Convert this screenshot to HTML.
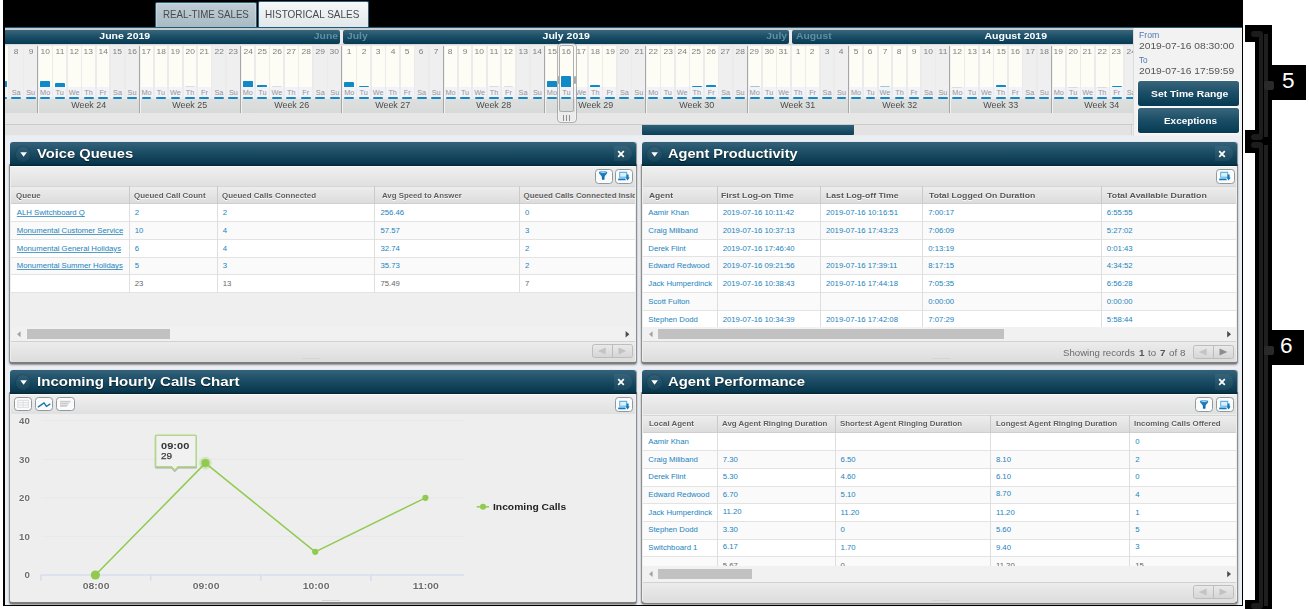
<!DOCTYPE html>
<html><head><meta charset="utf-8"><title>Dashboard</title>
<style>
html,body{margin:0;padding:0;background:#fff}
body{width:1309px;height:609px;position:relative;overflow:hidden;font-family:"Liberation Sans",sans-serif}
.a{position:absolute}
.t{position:absolute;white-space:pre;display:block}
.btn{box-sizing:border-box;border:1.7px solid #8f9a9e;border-radius:3.5px;background:#fbfbfb}
</style></head><body>
<div class="a" style="left:3px;top:0;width:1240px;height:606px;background:#000"></div>
<div class="a" style="left:5px;top:27px;width:1237px;height:578px;background:#ebeff3"></div>
<div class="a" style="left:155.30px;top:2.30px;width:100.20px;height:25.20px;background:linear-gradient(#bfcdd5,#a7bac4);border:1px solid #2f6077;border-bottom:none;border-radius:2px 2px 0 0;box-shadow:inset 0 0 0 1px rgba(255,255,255,.25)"></div>
<div class="a" style="left:258.00px;top:1.30px;width:109.30px;height:27.50px;background:linear-gradient(#f6f8f9,#dfe5e9);border:1px solid #2f6077;border-bottom:none;border-radius:2px 2px 0 0"></div>
<span class="t" style="left:162.60px;transform-origin:0 0;top:9.33px;font-size:10.6px;line-height:10.6px;color:#4a4a4a;transform:scaleX(0.9171);">REAL-TIME SALES</span>
<span class="t" style="left:265.20px;transform-origin:0 0;top:8.83px;font-size:10.6px;line-height:10.6px;color:#4a4a4a;transform:scaleX(0.9426);">HISTORICAL SALES</span>
<div class="a" style="left:5px;top:27px;width:1127.5px;height:109px;overflow:hidden;background:#ebebeb">
<div class="a" style="left:0.00px;top:0.00px;width:1128.00px;height:1.20px;background:#1f5a72"></div>
<div class="a" style="left:0.00px;top:1.20px;width:1128.00px;height:1.80px;background:#c3cdd2"></div>
<div class="a" style="left:-25.00px;top:3.00px;width:360.18px;height:13.60px;background:linear-gradient(#3a667c,#1c5068 45%,#063a52);border-radius:0 2px 2px 0"></div>
<div class="a" style="left:338.38px;top:3.00px;width:445.88px;height:13.60px;background:linear-gradient(#3a667c,#1c5068 45%,#063a52);border-radius:2px"></div>
<div class="a" style="left:787.46px;top:3.00px;width:400.00px;height:13.60px;background:linear-gradient(#3a667c,#1c5068 45%,#063a52);border-radius:2px 0 0 2px"></div>
<div class="a" style="left:0.00px;top:16.60px;width:1128.00px;height:1.90px;background:#d9d9d9"></div>
<div class="a" style="left:0.00px;top:72.40px;width:1128.00px;height:13.20px;background:linear-gradient(#dedfdf,#d8d9d9)"></div>
<div class="a" style="left:-9.74px;top:18.50px;width:12.88px;height:41.70px;background:#fdfdf6"></div>
<div class="a" style="left:-9.74px;top:60.20px;width:12.88px;height:9.70px;background:#f2f2f9"></div>
<div class="a" style="left:-8.24px;top:70.10px;width:9.88px;height:2.20px;background:#1488c4;border-radius:1px"></div>
<div class="a" style="left:-8.24px;top:54.00px;width:9.88px;height:6.00px;background:#0f8ac6;border-radius:1px 1px 0 0"></div>
<div class="a" style="left:4.74px;top:18.50px;width:12.88px;height:41.70px;background:#efefef"></div>
<div class="a" style="left:4.74px;top:60.20px;width:12.88px;height:9.70px;background:#efeff3"></div>
<div class="a" style="left:6.24px;top:70.10px;width:9.88px;height:2.20px;background:#1488c4;border-radius:1px"></div>
<div class="a" style="left:19.22px;top:18.50px;width:12.88px;height:41.70px;background:#efefef"></div>
<div class="a" style="left:19.22px;top:60.20px;width:12.88px;height:9.70px;background:#efeff3"></div>
<div class="a" style="left:20.72px;top:70.10px;width:9.88px;height:2.20px;background:#1488c4;border-radius:1px"></div>
<div class="a" style="left:33.70px;top:18.50px;width:12.88px;height:41.70px;background:#fdfdf6"></div>
<div class="a" style="left:33.70px;top:60.20px;width:12.88px;height:9.70px;background:#f2f2f9"></div>
<div class="a" style="left:35.20px;top:70.10px;width:9.88px;height:2.20px;background:#1488c4;border-radius:1px"></div>
<div class="a" style="left:35.20px;top:54.00px;width:9.88px;height:6.00px;background:#0f8ac6;border-radius:1px 1px 0 0"></div>
<div class="a" style="left:32.00px;top:18.50px;width:1.00px;height:67.00px;background:#a6a6a6"></div>
<div class="a" style="left:33.00px;top:18.50px;width:0.80px;height:67.00px;background:#f2f2f2"></div>
<div class="a" style="left:48.18px;top:18.50px;width:12.88px;height:41.70px;background:#fdfdf6"></div>
<div class="a" style="left:48.18px;top:60.20px;width:12.88px;height:9.70px;background:#f2f2f9"></div>
<div class="a" style="left:49.68px;top:70.10px;width:9.88px;height:2.20px;background:#1488c4;border-radius:1px"></div>
<div class="a" style="left:49.68px;top:56.40px;width:9.88px;height:3.60px;background:#0f8ac6;border-radius:1px 1px 0 0"></div>
<div class="a" style="left:62.66px;top:18.50px;width:12.88px;height:41.70px;background:#fdfdf6"></div>
<div class="a" style="left:62.66px;top:60.20px;width:12.88px;height:9.70px;background:#f2f2f9"></div>
<div class="a" style="left:64.16px;top:70.10px;width:9.88px;height:2.20px;background:#1488c4;border-radius:1px"></div>
<div class="a" style="left:77.14px;top:18.50px;width:12.88px;height:41.70px;background:#fdfdf6"></div>
<div class="a" style="left:77.14px;top:60.20px;width:12.88px;height:9.70px;background:#f2f2f9"></div>
<div class="a" style="left:78.64px;top:70.10px;width:9.88px;height:2.20px;background:#1488c4;border-radius:1px"></div>
<div class="a" style="left:91.62px;top:18.50px;width:12.88px;height:41.70px;background:#fdfdf6"></div>
<div class="a" style="left:91.62px;top:60.20px;width:12.88px;height:9.70px;background:#f2f2f9"></div>
<div class="a" style="left:93.12px;top:70.10px;width:9.88px;height:2.20px;background:#1488c4;border-radius:1px"></div>
<div class="a" style="left:106.10px;top:18.50px;width:12.88px;height:41.70px;background:#efefef"></div>
<div class="a" style="left:106.10px;top:60.20px;width:12.88px;height:9.70px;background:#efeff3"></div>
<div class="a" style="left:107.60px;top:70.10px;width:9.88px;height:2.20px;background:#1488c4;border-radius:1px"></div>
<div class="a" style="left:120.58px;top:18.50px;width:12.88px;height:41.70px;background:#efefef"></div>
<div class="a" style="left:120.58px;top:60.20px;width:12.88px;height:9.70px;background:#efeff3"></div>
<div class="a" style="left:122.08px;top:70.10px;width:9.88px;height:2.20px;background:#1488c4;border-radius:1px"></div>
<div class="a" style="left:135.06px;top:18.50px;width:12.88px;height:41.70px;background:#fdfdf6"></div>
<div class="a" style="left:135.06px;top:60.20px;width:12.88px;height:9.70px;background:#f2f2f9"></div>
<div class="a" style="left:136.56px;top:70.10px;width:9.88px;height:2.20px;background:#1488c4;border-radius:1px"></div>
<div class="a" style="left:134.00px;top:18.50px;width:1.00px;height:67.00px;background:#a6a6a6"></div>
<div class="a" style="left:135.00px;top:18.50px;width:0.80px;height:67.00px;background:#f2f2f2"></div>
<div class="a" style="left:149.54px;top:18.50px;width:12.88px;height:41.70px;background:#fdfdf6"></div>
<div class="a" style="left:149.54px;top:60.20px;width:12.88px;height:9.70px;background:#f2f2f9"></div>
<div class="a" style="left:151.04px;top:70.10px;width:9.88px;height:2.20px;background:#1488c4;border-radius:1px"></div>
<div class="a" style="left:164.02px;top:18.50px;width:12.88px;height:41.70px;background:#fdfdf6"></div>
<div class="a" style="left:164.02px;top:60.20px;width:12.88px;height:9.70px;background:#f2f2f9"></div>
<div class="a" style="left:165.52px;top:70.10px;width:9.88px;height:2.20px;background:#1488c4;border-radius:1px"></div>
<div class="a" style="left:178.50px;top:18.50px;width:12.88px;height:41.70px;background:#fdfdf6"></div>
<div class="a" style="left:178.50px;top:60.20px;width:12.88px;height:9.70px;background:#f2f2f9"></div>
<div class="a" style="left:180.00px;top:70.10px;width:9.88px;height:2.20px;background:#1488c4;border-radius:1px"></div>
<div class="a" style="left:180.00px;top:59.40px;width:9.88px;height:0.60px;background:#dcdcdc;border-radius:1px 1px 0 0"></div>
<div class="a" style="left:192.98px;top:18.50px;width:12.88px;height:41.70px;background:#fdfdf6"></div>
<div class="a" style="left:192.98px;top:60.20px;width:12.88px;height:9.70px;background:#f2f2f9"></div>
<div class="a" style="left:194.48px;top:70.10px;width:9.88px;height:2.20px;background:#1488c4;border-radius:1px"></div>
<div class="a" style="left:207.46px;top:18.50px;width:12.88px;height:41.70px;background:#efefef"></div>
<div class="a" style="left:207.46px;top:60.20px;width:12.88px;height:9.70px;background:#efeff3"></div>
<div class="a" style="left:208.96px;top:70.10px;width:9.88px;height:2.20px;background:#1488c4;border-radius:1px"></div>
<div class="a" style="left:221.94px;top:18.50px;width:12.88px;height:41.70px;background:#efefef"></div>
<div class="a" style="left:221.94px;top:60.20px;width:12.88px;height:9.70px;background:#efeff3"></div>
<div class="a" style="left:223.44px;top:70.10px;width:9.88px;height:2.20px;background:#1488c4;border-radius:1px"></div>
<div class="a" style="left:236.42px;top:18.50px;width:12.88px;height:41.70px;background:#fdfdf6"></div>
<div class="a" style="left:236.42px;top:60.20px;width:12.88px;height:9.70px;background:#f2f2f9"></div>
<div class="a" style="left:237.92px;top:70.10px;width:9.88px;height:2.20px;background:#1488c4;border-radius:1px"></div>
<div class="a" style="left:237.92px;top:54.00px;width:9.88px;height:6.00px;background:#0f8ac6;border-radius:1px 1px 0 0"></div>
<div class="a" style="left:235.00px;top:18.50px;width:1.00px;height:67.00px;background:#a6a6a6"></div>
<div class="a" style="left:236.00px;top:18.50px;width:0.80px;height:67.00px;background:#f2f2f2"></div>
<div class="a" style="left:250.90px;top:18.50px;width:12.88px;height:41.70px;background:#fdfdf6"></div>
<div class="a" style="left:250.90px;top:60.20px;width:12.88px;height:9.70px;background:#f2f2f9"></div>
<div class="a" style="left:252.40px;top:70.10px;width:9.88px;height:2.20px;background:#1488c4;border-radius:1px"></div>
<div class="a" style="left:252.40px;top:58.40px;width:9.88px;height:1.60px;background:#0f8ac6;border-radius:1px 1px 0 0"></div>
<div class="a" style="left:265.38px;top:18.50px;width:12.88px;height:41.70px;background:#fdfdf6"></div>
<div class="a" style="left:265.38px;top:60.20px;width:12.88px;height:9.70px;background:#f2f2f9"></div>
<div class="a" style="left:266.88px;top:70.10px;width:9.88px;height:2.20px;background:#1488c4;border-radius:1px"></div>
<div class="a" style="left:266.88px;top:59.40px;width:9.88px;height:0.60px;background:#dcdcdc;border-radius:1px 1px 0 0"></div>
<div class="a" style="left:279.86px;top:18.50px;width:12.88px;height:41.70px;background:#fdfdf6"></div>
<div class="a" style="left:279.86px;top:60.20px;width:12.88px;height:9.70px;background:#f2f2f9"></div>
<div class="a" style="left:281.36px;top:70.10px;width:9.88px;height:2.20px;background:#1488c4;border-radius:1px"></div>
<div class="a" style="left:294.34px;top:18.50px;width:12.88px;height:41.70px;background:#fdfdf6"></div>
<div class="a" style="left:294.34px;top:60.20px;width:12.88px;height:9.70px;background:#f2f2f9"></div>
<div class="a" style="left:295.84px;top:70.10px;width:9.88px;height:2.20px;background:#1488c4;border-radius:1px"></div>
<div class="a" style="left:308.82px;top:18.50px;width:12.88px;height:41.70px;background:#efefef"></div>
<div class="a" style="left:308.82px;top:60.20px;width:12.88px;height:9.70px;background:#efeff3"></div>
<div class="a" style="left:310.32px;top:70.10px;width:9.88px;height:2.20px;background:#1488c4;border-radius:1px"></div>
<div class="a" style="left:323.30px;top:18.50px;width:12.88px;height:41.70px;background:#efefef"></div>
<div class="a" style="left:323.30px;top:60.20px;width:12.88px;height:9.70px;background:#efeff3"></div>
<div class="a" style="left:324.80px;top:70.10px;width:9.88px;height:2.20px;background:#1488c4;border-radius:1px"></div>
<div class="a" style="left:337.78px;top:18.50px;width:12.88px;height:41.70px;background:#fdfdf6"></div>
<div class="a" style="left:337.78px;top:60.20px;width:12.88px;height:9.70px;background:#f2f2f9"></div>
<div class="a" style="left:339.28px;top:70.10px;width:9.88px;height:2.20px;background:#1488c4;border-radius:1px"></div>
<div class="a" style="left:339.28px;top:55.00px;width:9.88px;height:5.00px;background:#0f8ac6;border-radius:1px 1px 0 0"></div>
<div class="a" style="left:336.00px;top:18.50px;width:1.00px;height:67.00px;background:#a6a6a6"></div>
<div class="a" style="left:337.00px;top:18.50px;width:0.80px;height:67.00px;background:#f2f2f2"></div>
<div class="a" style="left:352.26px;top:18.50px;width:12.88px;height:41.70px;background:#fdfdf6"></div>
<div class="a" style="left:352.26px;top:60.20px;width:12.88px;height:9.70px;background:#f2f2f9"></div>
<div class="a" style="left:353.76px;top:70.10px;width:9.88px;height:2.20px;background:#1488c4;border-radius:1px"></div>
<div class="a" style="left:353.76px;top:59.00px;width:9.88px;height:1.00px;background:#0f8ac6;border-radius:1px 1px 0 0"></div>
<div class="a" style="left:366.74px;top:18.50px;width:12.88px;height:41.70px;background:#fdfdf6"></div>
<div class="a" style="left:366.74px;top:60.20px;width:12.88px;height:9.70px;background:#f2f2f9"></div>
<div class="a" style="left:368.24px;top:70.10px;width:9.88px;height:2.20px;background:#1488c4;border-radius:1px"></div>
<div class="a" style="left:381.22px;top:18.50px;width:12.88px;height:41.70px;background:#fdfdf6"></div>
<div class="a" style="left:381.22px;top:60.20px;width:12.88px;height:9.70px;background:#f2f2f9"></div>
<div class="a" style="left:382.72px;top:70.10px;width:9.88px;height:2.20px;background:#1488c4;border-radius:1px"></div>
<div class="a" style="left:395.70px;top:18.50px;width:12.88px;height:41.70px;background:#fdfdf6"></div>
<div class="a" style="left:395.70px;top:60.20px;width:12.88px;height:9.70px;background:#f2f2f9"></div>
<div class="a" style="left:397.20px;top:70.10px;width:9.88px;height:2.20px;background:#1488c4;border-radius:1px"></div>
<div class="a" style="left:410.18px;top:18.50px;width:12.88px;height:41.70px;background:#efefef"></div>
<div class="a" style="left:410.18px;top:60.20px;width:12.88px;height:9.70px;background:#efeff3"></div>
<div class="a" style="left:411.68px;top:70.10px;width:9.88px;height:2.20px;background:#1488c4;border-radius:1px"></div>
<div class="a" style="left:424.66px;top:18.50px;width:12.88px;height:41.70px;background:#efefef"></div>
<div class="a" style="left:424.66px;top:60.20px;width:12.88px;height:9.70px;background:#efeff3"></div>
<div class="a" style="left:426.16px;top:70.10px;width:9.88px;height:2.20px;background:#1488c4;border-radius:1px"></div>
<div class="a" style="left:439.14px;top:18.50px;width:12.88px;height:41.70px;background:#fdfdf6"></div>
<div class="a" style="left:439.14px;top:60.20px;width:12.88px;height:9.70px;background:#f2f2f9"></div>
<div class="a" style="left:440.64px;top:70.10px;width:9.88px;height:2.20px;background:#1488c4;border-radius:1px"></div>
<div class="a" style="left:438.00px;top:18.50px;width:1.00px;height:67.00px;background:#a6a6a6"></div>
<div class="a" style="left:439.00px;top:18.50px;width:0.80px;height:67.00px;background:#f2f2f2"></div>
<div class="a" style="left:453.62px;top:18.50px;width:12.88px;height:41.70px;background:#fdfdf6"></div>
<div class="a" style="left:453.62px;top:60.20px;width:12.88px;height:9.70px;background:#f2f2f9"></div>
<div class="a" style="left:455.12px;top:70.10px;width:9.88px;height:2.20px;background:#1488c4;border-radius:1px"></div>
<div class="a" style="left:468.10px;top:18.50px;width:12.88px;height:41.70px;background:#fdfdf6"></div>
<div class="a" style="left:468.10px;top:60.20px;width:12.88px;height:9.70px;background:#f2f2f9"></div>
<div class="a" style="left:469.60px;top:70.10px;width:9.88px;height:2.20px;background:#1488c4;border-radius:1px"></div>
<div class="a" style="left:482.58px;top:18.50px;width:12.88px;height:41.70px;background:#fdfdf6"></div>
<div class="a" style="left:482.58px;top:60.20px;width:12.88px;height:9.70px;background:#f2f2f9"></div>
<div class="a" style="left:484.08px;top:70.10px;width:9.88px;height:2.20px;background:#1488c4;border-radius:1px"></div>
<div class="a" style="left:484.08px;top:59.40px;width:9.88px;height:0.60px;background:#dcdcdc;border-radius:1px 1px 0 0"></div>
<div class="a" style="left:497.06px;top:18.50px;width:12.88px;height:41.70px;background:#fdfdf6"></div>
<div class="a" style="left:497.06px;top:60.20px;width:12.88px;height:9.70px;background:#f2f2f9"></div>
<div class="a" style="left:498.56px;top:70.10px;width:9.88px;height:2.20px;background:#1488c4;border-radius:1px"></div>
<div class="a" style="left:498.56px;top:59.40px;width:9.88px;height:0.60px;background:#dcdcdc;border-radius:1px 1px 0 0"></div>
<div class="a" style="left:511.54px;top:18.50px;width:12.88px;height:41.70px;background:#efefef"></div>
<div class="a" style="left:511.54px;top:60.20px;width:12.88px;height:9.70px;background:#efeff3"></div>
<div class="a" style="left:513.04px;top:70.10px;width:9.88px;height:2.20px;background:#1488c4;border-radius:1px"></div>
<div class="a" style="left:526.02px;top:18.50px;width:12.88px;height:41.70px;background:#efefef"></div>
<div class="a" style="left:526.02px;top:60.20px;width:12.88px;height:9.70px;background:#efeff3"></div>
<div class="a" style="left:527.52px;top:70.10px;width:9.88px;height:2.20px;background:#1488c4;border-radius:1px"></div>
<div class="a" style="left:540.50px;top:18.50px;width:12.88px;height:41.70px;background:#fdfdf6"></div>
<div class="a" style="left:540.50px;top:60.20px;width:12.88px;height:9.70px;background:#f2f2f9"></div>
<div class="a" style="left:542.00px;top:70.10px;width:9.88px;height:2.20px;background:#1488c4;border-radius:1px"></div>
<div class="a" style="left:542.00px;top:54.20px;width:9.88px;height:5.80px;background:#0f8ac6;border-radius:1px 1px 0 0"></div>
<div class="a" style="left:539.00px;top:18.50px;width:1.00px;height:67.00px;background:#a6a6a6"></div>
<div class="a" style="left:540.00px;top:18.50px;width:0.80px;height:67.00px;background:#f2f2f2"></div>
<div class="a" style="left:554.98px;top:18.50px;width:12.88px;height:41.70px;background:#fdfdf6"></div>
<div class="a" style="left:554.98px;top:60.20px;width:12.88px;height:9.70px;background:#f2f2f9"></div>
<div class="a" style="left:556.48px;top:70.10px;width:9.88px;height:2.20px;background:#1488c4;border-radius:1px"></div>
<div class="a" style="left:556.48px;top:48.70px;width:9.88px;height:11.30px;background:#0f8ac6;border-radius:1px 1px 0 0"></div>
<div class="a" style="left:569.46px;top:18.50px;width:12.88px;height:41.70px;background:#fdfdf6"></div>
<div class="a" style="left:569.46px;top:60.20px;width:12.88px;height:9.70px;background:#f2f2f9"></div>
<div class="a" style="left:570.96px;top:70.10px;width:9.88px;height:2.20px;background:#1488c4;border-radius:1px"></div>
<div class="a" style="left:583.94px;top:18.50px;width:12.88px;height:41.70px;background:#fdfdf6"></div>
<div class="a" style="left:583.94px;top:60.20px;width:12.88px;height:9.70px;background:#f2f2f9"></div>
<div class="a" style="left:585.44px;top:70.10px;width:9.88px;height:2.20px;background:#1488c4;border-radius:1px"></div>
<div class="a" style="left:585.44px;top:58.00px;width:9.88px;height:2.00px;background:#0f8ac6;border-radius:1px 1px 0 0"></div>
<div class="a" style="left:598.42px;top:18.50px;width:12.88px;height:41.70px;background:#fdfdf6"></div>
<div class="a" style="left:598.42px;top:60.20px;width:12.88px;height:9.70px;background:#f2f2f9"></div>
<div class="a" style="left:599.92px;top:70.10px;width:9.88px;height:2.20px;background:#1488c4;border-radius:1px"></div>
<div class="a" style="left:612.90px;top:18.50px;width:12.88px;height:41.70px;background:#efefef"></div>
<div class="a" style="left:612.90px;top:60.20px;width:12.88px;height:9.70px;background:#efeff3"></div>
<div class="a" style="left:614.40px;top:70.10px;width:9.88px;height:2.20px;background:#1488c4;border-radius:1px"></div>
<div class="a" style="left:627.38px;top:18.50px;width:12.88px;height:41.70px;background:#efefef"></div>
<div class="a" style="left:627.38px;top:60.20px;width:12.88px;height:9.70px;background:#efeff3"></div>
<div class="a" style="left:628.88px;top:70.10px;width:9.88px;height:2.20px;background:#1488c4;border-radius:1px"></div>
<div class="a" style="left:641.86px;top:18.50px;width:12.88px;height:41.70px;background:#fdfdf6"></div>
<div class="a" style="left:641.86px;top:60.20px;width:12.88px;height:9.70px;background:#f2f2f9"></div>
<div class="a" style="left:643.36px;top:70.10px;width:9.88px;height:2.20px;background:#1488c4;border-radius:1px"></div>
<div class="a" style="left:640.00px;top:18.50px;width:1.00px;height:67.00px;background:#a6a6a6"></div>
<div class="a" style="left:641.00px;top:18.50px;width:0.80px;height:67.00px;background:#f2f2f2"></div>
<div class="a" style="left:656.34px;top:18.50px;width:12.88px;height:41.70px;background:#fdfdf6"></div>
<div class="a" style="left:656.34px;top:60.20px;width:12.88px;height:9.70px;background:#f2f2f9"></div>
<div class="a" style="left:657.84px;top:70.10px;width:9.88px;height:2.20px;background:#1488c4;border-radius:1px"></div>
<div class="a" style="left:670.82px;top:18.50px;width:12.88px;height:41.70px;background:#fdfdf6"></div>
<div class="a" style="left:670.82px;top:60.20px;width:12.88px;height:9.70px;background:#f2f2f9"></div>
<div class="a" style="left:672.32px;top:70.10px;width:9.88px;height:2.20px;background:#1488c4;border-radius:1px"></div>
<div class="a" style="left:685.30px;top:18.50px;width:12.88px;height:41.70px;background:#fdfdf6"></div>
<div class="a" style="left:685.30px;top:60.20px;width:12.88px;height:9.70px;background:#f2f2f9"></div>
<div class="a" style="left:686.80px;top:70.10px;width:9.88px;height:2.20px;background:#1488c4;border-radius:1px"></div>
<div class="a" style="left:686.80px;top:59.00px;width:9.88px;height:1.00px;background:#0f8ac6;border-radius:1px 1px 0 0"></div>
<div class="a" style="left:699.78px;top:18.50px;width:12.88px;height:41.70px;background:#fdfdf6"></div>
<div class="a" style="left:699.78px;top:60.20px;width:12.88px;height:9.70px;background:#f2f2f9"></div>
<div class="a" style="left:701.28px;top:70.10px;width:9.88px;height:2.20px;background:#1488c4;border-radius:1px"></div>
<div class="a" style="left:701.28px;top:58.00px;width:9.88px;height:2.00px;background:#0f8ac6;border-radius:1px 1px 0 0"></div>
<div class="a" style="left:714.26px;top:18.50px;width:12.88px;height:41.70px;background:#efefef"></div>
<div class="a" style="left:714.26px;top:60.20px;width:12.88px;height:9.70px;background:#efeff3"></div>
<div class="a" style="left:715.76px;top:70.10px;width:9.88px;height:2.20px;background:#1488c4;border-radius:1px"></div>
<div class="a" style="left:728.74px;top:18.50px;width:12.88px;height:41.70px;background:#efefef"></div>
<div class="a" style="left:728.74px;top:60.20px;width:12.88px;height:9.70px;background:#efeff3"></div>
<div class="a" style="left:730.24px;top:70.10px;width:9.88px;height:2.20px;background:#1488c4;border-radius:1px"></div>
<div class="a" style="left:743.22px;top:18.50px;width:12.88px;height:41.70px;background:#fdfdf6"></div>
<div class="a" style="left:743.22px;top:60.20px;width:12.88px;height:9.70px;background:#f2f2f9"></div>
<div class="a" style="left:744.72px;top:70.10px;width:9.88px;height:2.20px;background:#1488c4;border-radius:1px"></div>
<div class="a" style="left:744.72px;top:59.20px;width:9.88px;height:0.80px;background:#9cc8dc;border-radius:1px 1px 0 0"></div>
<div class="a" style="left:742.00px;top:18.50px;width:1.00px;height:67.00px;background:#a6a6a6"></div>
<div class="a" style="left:743.00px;top:18.50px;width:0.80px;height:67.00px;background:#f2f2f2"></div>
<div class="a" style="left:757.70px;top:18.50px;width:12.88px;height:41.70px;background:#fdfdf6"></div>
<div class="a" style="left:757.70px;top:60.20px;width:12.88px;height:9.70px;background:#f2f2f9"></div>
<div class="a" style="left:759.20px;top:70.10px;width:9.88px;height:2.20px;background:#1488c4;border-radius:1px"></div>
<div class="a" style="left:772.18px;top:18.50px;width:12.88px;height:41.70px;background:#fdfdf6"></div>
<div class="a" style="left:772.18px;top:60.20px;width:12.88px;height:9.70px;background:#f2f2f9"></div>
<div class="a" style="left:773.68px;top:70.10px;width:9.88px;height:2.20px;background:#1488c4;border-radius:1px"></div>
<div class="a" style="left:786.66px;top:18.50px;width:12.88px;height:41.70px;background:#fdfdf6"></div>
<div class="a" style="left:786.66px;top:60.20px;width:12.88px;height:9.70px;background:#f2f2f9"></div>
<div class="a" style="left:788.16px;top:70.10px;width:9.88px;height:2.20px;background:#1488c4;border-radius:1px"></div>
<div class="a" style="left:801.14px;top:18.50px;width:12.88px;height:41.70px;background:#fdfdf6"></div>
<div class="a" style="left:801.14px;top:60.20px;width:12.88px;height:9.70px;background:#f2f2f9"></div>
<div class="a" style="left:802.64px;top:70.10px;width:9.88px;height:2.20px;background:#1488c4;border-radius:1px"></div>
<div class="a" style="left:815.62px;top:18.50px;width:12.88px;height:41.70px;background:#efefef"></div>
<div class="a" style="left:815.62px;top:60.20px;width:12.88px;height:9.70px;background:#efeff3"></div>
<div class="a" style="left:817.12px;top:70.10px;width:9.88px;height:2.20px;background:#1488c4;border-radius:1px"></div>
<div class="a" style="left:830.10px;top:18.50px;width:12.88px;height:41.70px;background:#efefef"></div>
<div class="a" style="left:830.10px;top:60.20px;width:12.88px;height:9.70px;background:#efeff3"></div>
<div class="a" style="left:831.60px;top:70.10px;width:9.88px;height:2.20px;background:#1488c4;border-radius:1px"></div>
<div class="a" style="left:844.58px;top:18.50px;width:12.88px;height:41.70px;background:#fdfdf6"></div>
<div class="a" style="left:844.58px;top:60.20px;width:12.88px;height:9.70px;background:#f2f2f9"></div>
<div class="a" style="left:846.08px;top:70.10px;width:9.88px;height:2.20px;background:#1488c4;border-radius:1px"></div>
<div class="a" style="left:843.00px;top:18.50px;width:1.00px;height:67.00px;background:#a6a6a6"></div>
<div class="a" style="left:844.00px;top:18.50px;width:0.80px;height:67.00px;background:#f2f2f2"></div>
<div class="a" style="left:859.06px;top:18.50px;width:12.88px;height:41.70px;background:#fdfdf6"></div>
<div class="a" style="left:859.06px;top:60.20px;width:12.88px;height:9.70px;background:#f2f2f9"></div>
<div class="a" style="left:860.56px;top:70.10px;width:9.88px;height:2.20px;background:#1488c4;border-radius:1px"></div>
<div class="a" style="left:873.54px;top:18.50px;width:12.88px;height:41.70px;background:#fdfdf6"></div>
<div class="a" style="left:873.54px;top:60.20px;width:12.88px;height:9.70px;background:#f2f2f9"></div>
<div class="a" style="left:875.04px;top:70.10px;width:9.88px;height:2.20px;background:#1488c4;border-radius:1px"></div>
<div class="a" style="left:875.04px;top:59.20px;width:9.88px;height:0.80px;background:#9cc8dc;border-radius:1px 1px 0 0"></div>
<div class="a" style="left:888.02px;top:18.50px;width:12.88px;height:41.70px;background:#fdfdf6"></div>
<div class="a" style="left:888.02px;top:60.20px;width:12.88px;height:9.70px;background:#f2f2f9"></div>
<div class="a" style="left:889.52px;top:70.10px;width:9.88px;height:2.20px;background:#1488c4;border-radius:1px"></div>
<div class="a" style="left:902.50px;top:18.50px;width:12.88px;height:41.70px;background:#fdfdf6"></div>
<div class="a" style="left:902.50px;top:60.20px;width:12.88px;height:9.70px;background:#f2f2f9"></div>
<div class="a" style="left:904.00px;top:70.10px;width:9.88px;height:2.20px;background:#1488c4;border-radius:1px"></div>
<div class="a" style="left:916.98px;top:18.50px;width:12.88px;height:41.70px;background:#efefef"></div>
<div class="a" style="left:916.98px;top:60.20px;width:12.88px;height:9.70px;background:#efeff3"></div>
<div class="a" style="left:918.48px;top:70.10px;width:9.88px;height:2.20px;background:#1488c4;border-radius:1px"></div>
<div class="a" style="left:931.46px;top:18.50px;width:12.88px;height:41.70px;background:#efefef"></div>
<div class="a" style="left:931.46px;top:60.20px;width:12.88px;height:9.70px;background:#efeff3"></div>
<div class="a" style="left:932.96px;top:70.10px;width:9.88px;height:2.20px;background:#1488c4;border-radius:1px"></div>
<div class="a" style="left:945.94px;top:18.50px;width:12.88px;height:41.70px;background:#fdfdf6"></div>
<div class="a" style="left:945.94px;top:60.20px;width:12.88px;height:9.70px;background:#f2f2f9"></div>
<div class="a" style="left:947.44px;top:70.10px;width:9.88px;height:2.20px;background:#1488c4;border-radius:1px"></div>
<div class="a" style="left:947.44px;top:59.50px;width:9.88px;height:0.50px;background:#dcdcdc;border-radius:1px 1px 0 0"></div>
<div class="a" style="left:944.00px;top:18.50px;width:1.00px;height:67.00px;background:#a6a6a6"></div>
<div class="a" style="left:945.00px;top:18.50px;width:0.80px;height:67.00px;background:#f2f2f2"></div>
<div class="a" style="left:960.42px;top:18.50px;width:12.88px;height:41.70px;background:#fdfdf6"></div>
<div class="a" style="left:960.42px;top:60.20px;width:12.88px;height:9.70px;background:#f2f2f9"></div>
<div class="a" style="left:961.92px;top:70.10px;width:9.88px;height:2.20px;background:#1488c4;border-radius:1px"></div>
<div class="a" style="left:974.90px;top:18.50px;width:12.88px;height:41.70px;background:#fdfdf6"></div>
<div class="a" style="left:974.90px;top:60.20px;width:12.88px;height:9.70px;background:#f2f2f9"></div>
<div class="a" style="left:976.40px;top:70.10px;width:9.88px;height:2.20px;background:#1488c4;border-radius:1px"></div>
<div class="a" style="left:989.38px;top:18.50px;width:12.88px;height:41.70px;background:#fdfdf6"></div>
<div class="a" style="left:989.38px;top:60.20px;width:12.88px;height:9.70px;background:#f2f2f9"></div>
<div class="a" style="left:990.88px;top:70.10px;width:9.88px;height:2.20px;background:#1488c4;border-radius:1px"></div>
<div class="a" style="left:990.88px;top:58.00px;width:9.88px;height:2.00px;background:#0f8ac6;border-radius:1px 1px 0 0"></div>
<div class="a" style="left:1003.86px;top:18.50px;width:12.88px;height:41.70px;background:#fdfdf6"></div>
<div class="a" style="left:1003.86px;top:60.20px;width:12.88px;height:9.70px;background:#f2f2f9"></div>
<div class="a" style="left:1005.36px;top:70.10px;width:9.88px;height:2.20px;background:#1488c4;border-radius:1px"></div>
<div class="a" style="left:1018.34px;top:18.50px;width:12.88px;height:41.70px;background:#efefef"></div>
<div class="a" style="left:1018.34px;top:60.20px;width:12.88px;height:9.70px;background:#efeff3"></div>
<div class="a" style="left:1019.84px;top:70.10px;width:9.88px;height:2.20px;background:#1488c4;border-radius:1px"></div>
<div class="a" style="left:1032.82px;top:18.50px;width:12.88px;height:41.70px;background:#efefef"></div>
<div class="a" style="left:1032.82px;top:60.20px;width:12.88px;height:9.70px;background:#efeff3"></div>
<div class="a" style="left:1034.32px;top:70.10px;width:9.88px;height:2.20px;background:#1488c4;border-radius:1px"></div>
<div class="a" style="left:1047.30px;top:18.50px;width:12.88px;height:41.70px;background:#fdfdf6"></div>
<div class="a" style="left:1047.30px;top:60.20px;width:12.88px;height:9.70px;background:#f2f2f9"></div>
<div class="a" style="left:1048.80px;top:70.10px;width:9.88px;height:2.20px;background:#1488c4;border-radius:1px"></div>
<div class="a" style="left:1046.00px;top:18.50px;width:1.00px;height:67.00px;background:#a6a6a6"></div>
<div class="a" style="left:1047.00px;top:18.50px;width:0.80px;height:67.00px;background:#f2f2f2"></div>
<div class="a" style="left:1061.78px;top:18.50px;width:12.88px;height:41.70px;background:#fdfdf6"></div>
<div class="a" style="left:1061.78px;top:60.20px;width:12.88px;height:9.70px;background:#f2f2f9"></div>
<div class="a" style="left:1063.28px;top:70.10px;width:9.88px;height:2.20px;background:#1488c4;border-radius:1px"></div>
<div class="a" style="left:1063.28px;top:59.50px;width:9.88px;height:0.50px;background:#dcdcdc;border-radius:1px 1px 0 0"></div>
<div class="a" style="left:1076.26px;top:18.50px;width:12.88px;height:41.70px;background:#fdfdf6"></div>
<div class="a" style="left:1076.26px;top:60.20px;width:12.88px;height:9.70px;background:#f2f2f9"></div>
<div class="a" style="left:1077.76px;top:70.10px;width:9.88px;height:2.20px;background:#1488c4;border-radius:1px"></div>
<div class="a" style="left:1090.74px;top:18.50px;width:12.88px;height:41.70px;background:#fdfdf6"></div>
<div class="a" style="left:1090.74px;top:60.20px;width:12.88px;height:9.70px;background:#f2f2f9"></div>
<div class="a" style="left:1092.24px;top:70.10px;width:9.88px;height:2.20px;background:#1488c4;border-radius:1px"></div>
<div class="a" style="left:1092.24px;top:59.50px;width:9.88px;height:0.50px;background:#dcdcdc;border-radius:1px 1px 0 0"></div>
<div class="a" style="left:1105.22px;top:18.50px;width:12.88px;height:41.70px;background:#fdfdf6"></div>
<div class="a" style="left:1105.22px;top:60.20px;width:12.88px;height:9.70px;background:#f2f2f9"></div>
<div class="a" style="left:1106.72px;top:70.10px;width:9.88px;height:2.20px;background:#1488c4;border-radius:1px"></div>
<div class="a" style="left:1106.72px;top:59.00px;width:9.88px;height:1.00px;background:#0f8ac6;border-radius:1px 1px 0 0"></div>
<div class="a" style="left:1119.70px;top:18.50px;width:12.88px;height:41.70px;background:#efefef"></div>
<div class="a" style="left:1119.70px;top:60.20px;width:12.88px;height:9.70px;background:#efeff3"></div>
<div class="a" style="left:1121.20px;top:70.10px;width:9.88px;height:2.20px;background:#1488c4;border-radius:1px"></div>
</div>
<div class="a" style="left:5px;top:27px;width:1127.5px;height:109px;overflow:hidden"><div class="a" style="left:-5px;top:-27px;width:1309px;height:609px">
<span class="t" style="left:-0.44px;transform-origin:50% 0;top:47.88px;font-size:7.7px;line-height:7.7px;color:#808080;transform:scaleX(1.1000);">7</span>
<span class="t" style="left:-1.75px;transform-origin:50% 0;top:89.22px;font-size:7.3px;line-height:7.3px;color:#949494;">Fr</span>
<span class="t" style="left:14.04px;transform-origin:50% 0;top:47.88px;font-size:7.7px;line-height:7.7px;color:#808080;transform:scaleX(1.1000);">8</span>
<span class="t" style="left:11.72px;transform-origin:50% 0;top:89.22px;font-size:7.3px;line-height:7.3px;color:#949494;">Sa</span>
<span class="t" style="left:28.52px;transform-origin:50% 0;top:47.88px;font-size:7.7px;line-height:7.7px;color:#808080;transform:scaleX(1.1000);">9</span>
<span class="t" style="left:26.20px;transform-origin:50% 0;top:89.22px;font-size:7.3px;line-height:7.3px;color:#949494;">Su</span>
<span class="t" style="left:40.86px;transform-origin:50% 0;top:47.88px;font-size:7.7px;line-height:7.7px;color:#808080;transform:scaleX(1.1000);">10</span>
<span class="t" style="left:40.07px;transform-origin:50% 0;top:89.22px;font-size:7.3px;line-height:7.3px;color:#949494;">Mo</span>
<span class="t" style="left:71.88px;transform-origin:50% 0;top:101.30px;font-size:8.5px;line-height:8.5px;color:#4c4c4c;transform:scaleX(1.0500);">Week 24</span>
<span class="t" style="left:55.62px;transform-origin:50% 0;top:47.88px;font-size:7.7px;line-height:7.7px;color:#808080;transform:scaleX(1.1000);">11</span>
<span class="t" style="left:55.50px;transform-origin:50% 0;top:89.22px;font-size:7.3px;line-height:7.3px;color:#949494;">Tu</span>
<span class="t" style="left:69.82px;transform-origin:50% 0;top:47.88px;font-size:7.7px;line-height:7.7px;color:#808080;transform:scaleX(1.1000);">12</span>
<span class="t" style="left:68.69px;transform-origin:50% 0;top:89.22px;font-size:7.3px;line-height:7.3px;color:#949494;">We</span>
<span class="t" style="left:84.30px;transform-origin:50% 0;top:47.88px;font-size:7.7px;line-height:7.7px;color:#808080;transform:scaleX(1.1000);">13</span>
<span class="t" style="left:84.32px;transform-origin:50% 0;top:89.22px;font-size:7.3px;line-height:7.3px;color:#949494;">Th</span>
<span class="t" style="left:98.78px;transform-origin:50% 0;top:47.88px;font-size:7.7px;line-height:7.7px;color:#808080;transform:scaleX(1.1000);">14</span>
<span class="t" style="left:99.61px;transform-origin:50% 0;top:89.22px;font-size:7.3px;line-height:7.3px;color:#949494;">Fr</span>
<span class="t" style="left:113.26px;transform-origin:50% 0;top:47.88px;font-size:7.7px;line-height:7.7px;color:#808080;transform:scaleX(1.1000);">15</span>
<span class="t" style="left:113.08px;transform-origin:50% 0;top:89.22px;font-size:7.3px;line-height:7.3px;color:#949494;">Sa</span>
<span class="t" style="left:127.74px;transform-origin:50% 0;top:47.88px;font-size:7.7px;line-height:7.7px;color:#808080;transform:scaleX(1.1000);">16</span>
<span class="t" style="left:127.56px;transform-origin:50% 0;top:89.22px;font-size:7.3px;line-height:7.3px;color:#949494;">Su</span>
<span class="t" style="left:142.22px;transform-origin:50% 0;top:47.88px;font-size:7.7px;line-height:7.7px;color:#808080;transform:scaleX(1.1000);">17</span>
<span class="t" style="left:141.43px;transform-origin:50% 0;top:89.22px;font-size:7.3px;line-height:7.3px;color:#949494;">Mo</span>
<span class="t" style="left:173.24px;transform-origin:50% 0;top:101.30px;font-size:8.5px;line-height:8.5px;color:#4c4c4c;transform:scaleX(1.0500);">Week 25</span>
<span class="t" style="left:156.70px;transform-origin:50% 0;top:47.88px;font-size:7.7px;line-height:7.7px;color:#808080;transform:scaleX(1.1000);">18</span>
<span class="t" style="left:156.86px;transform-origin:50% 0;top:89.22px;font-size:7.3px;line-height:7.3px;color:#949494;">Tu</span>
<span class="t" style="left:171.18px;transform-origin:50% 0;top:47.88px;font-size:7.7px;line-height:7.7px;color:#808080;transform:scaleX(1.1000);">19</span>
<span class="t" style="left:170.05px;transform-origin:50% 0;top:89.22px;font-size:7.3px;line-height:7.3px;color:#949494;">We</span>
<span class="t" style="left:185.66px;transform-origin:50% 0;top:47.88px;font-size:7.7px;line-height:7.7px;color:#808080;transform:scaleX(1.1000);">20</span>
<span class="t" style="left:185.68px;transform-origin:50% 0;top:89.22px;font-size:7.3px;line-height:7.3px;color:#949494;">Th</span>
<span class="t" style="left:200.14px;transform-origin:50% 0;top:47.88px;font-size:7.7px;line-height:7.7px;color:#808080;transform:scaleX(1.1000);">21</span>
<span class="t" style="left:200.97px;transform-origin:50% 0;top:89.22px;font-size:7.3px;line-height:7.3px;color:#949494;">Fr</span>
<span class="t" style="left:214.62px;transform-origin:50% 0;top:47.88px;font-size:7.7px;line-height:7.7px;color:#808080;transform:scaleX(1.1000);">22</span>
<span class="t" style="left:214.44px;transform-origin:50% 0;top:89.22px;font-size:7.3px;line-height:7.3px;color:#949494;">Sa</span>
<span class="t" style="left:229.10px;transform-origin:50% 0;top:47.88px;font-size:7.7px;line-height:7.7px;color:#808080;transform:scaleX(1.1000);">23</span>
<span class="t" style="left:228.92px;transform-origin:50% 0;top:89.22px;font-size:7.3px;line-height:7.3px;color:#949494;">Su</span>
<span class="t" style="left:243.58px;transform-origin:50% 0;top:47.88px;font-size:7.7px;line-height:7.7px;color:#808080;transform:scaleX(1.1000);">24</span>
<span class="t" style="left:242.79px;transform-origin:50% 0;top:89.22px;font-size:7.3px;line-height:7.3px;color:#949494;">Mo</span>
<span class="t" style="left:274.60px;transform-origin:50% 0;top:101.30px;font-size:8.5px;line-height:8.5px;color:#4c4c4c;transform:scaleX(1.0500);">Week 26</span>
<span class="t" style="left:258.06px;transform-origin:50% 0;top:47.88px;font-size:7.7px;line-height:7.7px;color:#808080;transform:scaleX(1.1000);">25</span>
<span class="t" style="left:258.22px;transform-origin:50% 0;top:89.22px;font-size:7.3px;line-height:7.3px;color:#949494;">Tu</span>
<span class="t" style="left:272.54px;transform-origin:50% 0;top:47.88px;font-size:7.7px;line-height:7.7px;color:#808080;transform:scaleX(1.1000);">26</span>
<span class="t" style="left:271.41px;transform-origin:50% 0;top:89.22px;font-size:7.3px;line-height:7.3px;color:#949494;">We</span>
<span class="t" style="left:287.02px;transform-origin:50% 0;top:47.88px;font-size:7.7px;line-height:7.7px;color:#808080;transform:scaleX(1.1000);">27</span>
<span class="t" style="left:287.04px;transform-origin:50% 0;top:89.22px;font-size:7.3px;line-height:7.3px;color:#949494;">Th</span>
<span class="t" style="left:301.50px;transform-origin:50% 0;top:47.88px;font-size:7.7px;line-height:7.7px;color:#808080;transform:scaleX(1.1000);">28</span>
<span class="t" style="left:302.33px;transform-origin:50% 0;top:89.22px;font-size:7.3px;line-height:7.3px;color:#949494;">Fr</span>
<span class="t" style="left:315.98px;transform-origin:50% 0;top:47.88px;font-size:7.7px;line-height:7.7px;color:#808080;transform:scaleX(1.1000);">29</span>
<span class="t" style="left:315.80px;transform-origin:50% 0;top:89.22px;font-size:7.3px;line-height:7.3px;color:#949494;">Sa</span>
<span class="t" style="left:330.46px;transform-origin:50% 0;top:47.88px;font-size:7.7px;line-height:7.7px;color:#808080;transform:scaleX(1.1000);">30</span>
<span class="t" style="left:330.28px;transform-origin:50% 0;top:89.22px;font-size:7.3px;line-height:7.3px;color:#949494;">Su</span>
<span class="t" style="left:347.08px;transform-origin:50% 0;top:47.88px;font-size:7.7px;line-height:7.7px;color:#808080;transform:scaleX(1.1000);">1</span>
<span class="t" style="left:344.15px;transform-origin:50% 0;top:89.22px;font-size:7.3px;line-height:7.3px;color:#949494;">Mo</span>
<span class="t" style="left:375.96px;transform-origin:50% 0;top:101.30px;font-size:8.5px;line-height:8.5px;color:#4c4c4c;transform:scaleX(1.0500);">Week 27</span>
<span class="t" style="left:361.56px;transform-origin:50% 0;top:47.88px;font-size:7.7px;line-height:7.7px;color:#808080;transform:scaleX(1.1000);">2</span>
<span class="t" style="left:359.58px;transform-origin:50% 0;top:89.22px;font-size:7.3px;line-height:7.3px;color:#949494;">Tu</span>
<span class="t" style="left:376.04px;transform-origin:50% 0;top:47.88px;font-size:7.7px;line-height:7.7px;color:#808080;transform:scaleX(1.1000);">3</span>
<span class="t" style="left:372.77px;transform-origin:50% 0;top:89.22px;font-size:7.3px;line-height:7.3px;color:#949494;">We</span>
<span class="t" style="left:390.52px;transform-origin:50% 0;top:47.88px;font-size:7.7px;line-height:7.7px;color:#808080;transform:scaleX(1.1000);">4</span>
<span class="t" style="left:388.40px;transform-origin:50% 0;top:89.22px;font-size:7.3px;line-height:7.3px;color:#949494;">Th</span>
<span class="t" style="left:405.00px;transform-origin:50% 0;top:47.88px;font-size:7.7px;line-height:7.7px;color:#808080;transform:scaleX(1.1000);">5</span>
<span class="t" style="left:403.69px;transform-origin:50% 0;top:89.22px;font-size:7.3px;line-height:7.3px;color:#949494;">Fr</span>
<span class="t" style="left:419.48px;transform-origin:50% 0;top:47.88px;font-size:7.7px;line-height:7.7px;color:#808080;transform:scaleX(1.1000);">6</span>
<span class="t" style="left:417.16px;transform-origin:50% 0;top:89.22px;font-size:7.3px;line-height:7.3px;color:#949494;">Sa</span>
<span class="t" style="left:433.96px;transform-origin:50% 0;top:47.88px;font-size:7.7px;line-height:7.7px;color:#808080;transform:scaleX(1.1000);">7</span>
<span class="t" style="left:431.64px;transform-origin:50% 0;top:89.22px;font-size:7.3px;line-height:7.3px;color:#949494;">Su</span>
<span class="t" style="left:448.44px;transform-origin:50% 0;top:47.88px;font-size:7.7px;line-height:7.7px;color:#808080;transform:scaleX(1.1000);">8</span>
<span class="t" style="left:445.51px;transform-origin:50% 0;top:89.22px;font-size:7.3px;line-height:7.3px;color:#949494;">Mo</span>
<span class="t" style="left:477.32px;transform-origin:50% 0;top:101.30px;font-size:8.5px;line-height:8.5px;color:#4c4c4c;transform:scaleX(1.0500);">Week 28</span>
<span class="t" style="left:462.92px;transform-origin:50% 0;top:47.88px;font-size:7.7px;line-height:7.7px;color:#808080;transform:scaleX(1.1000);">9</span>
<span class="t" style="left:460.94px;transform-origin:50% 0;top:89.22px;font-size:7.3px;line-height:7.3px;color:#949494;">Tu</span>
<span class="t" style="left:475.26px;transform-origin:50% 0;top:47.88px;font-size:7.7px;line-height:7.7px;color:#808080;transform:scaleX(1.1000);">10</span>
<span class="t" style="left:474.13px;transform-origin:50% 0;top:89.22px;font-size:7.3px;line-height:7.3px;color:#949494;">We</span>
<span class="t" style="left:490.02px;transform-origin:50% 0;top:47.88px;font-size:7.7px;line-height:7.7px;color:#808080;transform:scaleX(1.1000);">11</span>
<span class="t" style="left:489.76px;transform-origin:50% 0;top:89.22px;font-size:7.3px;line-height:7.3px;color:#949494;">Th</span>
<span class="t" style="left:504.22px;transform-origin:50% 0;top:47.88px;font-size:7.7px;line-height:7.7px;color:#808080;transform:scaleX(1.1000);">12</span>
<span class="t" style="left:505.05px;transform-origin:50% 0;top:89.22px;font-size:7.3px;line-height:7.3px;color:#949494;">Fr</span>
<span class="t" style="left:518.70px;transform-origin:50% 0;top:47.88px;font-size:7.7px;line-height:7.7px;color:#808080;transform:scaleX(1.1000);">13</span>
<span class="t" style="left:518.52px;transform-origin:50% 0;top:89.22px;font-size:7.3px;line-height:7.3px;color:#949494;">Sa</span>
<span class="t" style="left:533.18px;transform-origin:50% 0;top:47.88px;font-size:7.7px;line-height:7.7px;color:#808080;transform:scaleX(1.1000);">14</span>
<span class="t" style="left:533.00px;transform-origin:50% 0;top:89.22px;font-size:7.3px;line-height:7.3px;color:#949494;">Su</span>
<span class="t" style="left:547.66px;transform-origin:50% 0;top:47.88px;font-size:7.7px;line-height:7.7px;color:#808080;transform:scaleX(1.1000);">15</span>
<span class="t" style="left:546.87px;transform-origin:50% 0;top:89.22px;font-size:7.3px;line-height:7.3px;color:#949494;">Mo</span>
<span class="t" style="left:578.68px;transform-origin:50% 0;top:101.30px;font-size:8.5px;line-height:8.5px;color:#4c4c4c;transform:scaleX(1.0500);">Week 29</span>
<span class="t" style="left:562.14px;transform-origin:50% 0;top:47.88px;font-size:7.7px;line-height:7.7px;color:#808080;transform:scaleX(1.1000);">16</span>
<span class="t" style="left:562.30px;transform-origin:50% 0;top:89.22px;font-size:7.3px;line-height:7.3px;color:#949494;">Tu</span>
<span class="t" style="left:576.62px;transform-origin:50% 0;top:47.88px;font-size:7.7px;line-height:7.7px;color:#808080;transform:scaleX(1.1000);">17</span>
<span class="t" style="left:575.49px;transform-origin:50% 0;top:89.22px;font-size:7.3px;line-height:7.3px;color:#949494;">We</span>
<span class="t" style="left:591.10px;transform-origin:50% 0;top:47.88px;font-size:7.7px;line-height:7.7px;color:#808080;transform:scaleX(1.1000);">18</span>
<span class="t" style="left:591.12px;transform-origin:50% 0;top:89.22px;font-size:7.3px;line-height:7.3px;color:#949494;">Th</span>
<span class="t" style="left:605.58px;transform-origin:50% 0;top:47.88px;font-size:7.7px;line-height:7.7px;color:#808080;transform:scaleX(1.1000);">19</span>
<span class="t" style="left:606.41px;transform-origin:50% 0;top:89.22px;font-size:7.3px;line-height:7.3px;color:#949494;">Fr</span>
<span class="t" style="left:620.06px;transform-origin:50% 0;top:47.88px;font-size:7.7px;line-height:7.7px;color:#808080;transform:scaleX(1.1000);">20</span>
<span class="t" style="left:619.88px;transform-origin:50% 0;top:89.22px;font-size:7.3px;line-height:7.3px;color:#949494;">Sa</span>
<span class="t" style="left:634.54px;transform-origin:50% 0;top:47.88px;font-size:7.7px;line-height:7.7px;color:#808080;transform:scaleX(1.1000);">21</span>
<span class="t" style="left:634.36px;transform-origin:50% 0;top:89.22px;font-size:7.3px;line-height:7.3px;color:#949494;">Su</span>
<span class="t" style="left:649.02px;transform-origin:50% 0;top:47.88px;font-size:7.7px;line-height:7.7px;color:#808080;transform:scaleX(1.1000);">22</span>
<span class="t" style="left:648.23px;transform-origin:50% 0;top:89.22px;font-size:7.3px;line-height:7.3px;color:#949494;">Mo</span>
<span class="t" style="left:680.04px;transform-origin:50% 0;top:101.30px;font-size:8.5px;line-height:8.5px;color:#4c4c4c;transform:scaleX(1.0500);">Week 30</span>
<span class="t" style="left:663.50px;transform-origin:50% 0;top:47.88px;font-size:7.7px;line-height:7.7px;color:#808080;transform:scaleX(1.1000);">23</span>
<span class="t" style="left:663.66px;transform-origin:50% 0;top:89.22px;font-size:7.3px;line-height:7.3px;color:#949494;">Tu</span>
<span class="t" style="left:677.98px;transform-origin:50% 0;top:47.88px;font-size:7.7px;line-height:7.7px;color:#808080;transform:scaleX(1.1000);">24</span>
<span class="t" style="left:676.85px;transform-origin:50% 0;top:89.22px;font-size:7.3px;line-height:7.3px;color:#949494;">We</span>
<span class="t" style="left:692.46px;transform-origin:50% 0;top:47.88px;font-size:7.7px;line-height:7.7px;color:#808080;transform:scaleX(1.1000);">25</span>
<span class="t" style="left:692.48px;transform-origin:50% 0;top:89.22px;font-size:7.3px;line-height:7.3px;color:#949494;">Th</span>
<span class="t" style="left:706.94px;transform-origin:50% 0;top:47.88px;font-size:7.7px;line-height:7.7px;color:#808080;transform:scaleX(1.1000);">26</span>
<span class="t" style="left:707.77px;transform-origin:50% 0;top:89.22px;font-size:7.3px;line-height:7.3px;color:#949494;">Fr</span>
<span class="t" style="left:721.42px;transform-origin:50% 0;top:47.88px;font-size:7.7px;line-height:7.7px;color:#808080;transform:scaleX(1.1000);">27</span>
<span class="t" style="left:721.24px;transform-origin:50% 0;top:89.22px;font-size:7.3px;line-height:7.3px;color:#949494;">Sa</span>
<span class="t" style="left:735.90px;transform-origin:50% 0;top:47.88px;font-size:7.7px;line-height:7.7px;color:#808080;transform:scaleX(1.1000);">28</span>
<span class="t" style="left:735.72px;transform-origin:50% 0;top:89.22px;font-size:7.3px;line-height:7.3px;color:#949494;">Su</span>
<span class="t" style="left:750.38px;transform-origin:50% 0;top:47.88px;font-size:7.7px;line-height:7.7px;color:#808080;transform:scaleX(1.1000);">29</span>
<span class="t" style="left:749.59px;transform-origin:50% 0;top:89.22px;font-size:7.3px;line-height:7.3px;color:#949494;">Mo</span>
<span class="t" style="left:781.40px;transform-origin:50% 0;top:101.30px;font-size:8.5px;line-height:8.5px;color:#4c4c4c;transform:scaleX(1.0500);">Week 31</span>
<span class="t" style="left:764.86px;transform-origin:50% 0;top:47.88px;font-size:7.7px;line-height:7.7px;color:#808080;transform:scaleX(1.1000);">30</span>
<span class="t" style="left:765.02px;transform-origin:50% 0;top:89.22px;font-size:7.3px;line-height:7.3px;color:#949494;">Tu</span>
<span class="t" style="left:779.34px;transform-origin:50% 0;top:47.88px;font-size:7.7px;line-height:7.7px;color:#808080;transform:scaleX(1.1000);">31</span>
<span class="t" style="left:778.21px;transform-origin:50% 0;top:89.22px;font-size:7.3px;line-height:7.3px;color:#949494;">We</span>
<span class="t" style="left:795.96px;transform-origin:50% 0;top:47.88px;font-size:7.7px;line-height:7.7px;color:#808080;transform:scaleX(1.1000);">1</span>
<span class="t" style="left:793.84px;transform-origin:50% 0;top:89.22px;font-size:7.3px;line-height:7.3px;color:#949494;">Th</span>
<span class="t" style="left:810.44px;transform-origin:50% 0;top:47.88px;font-size:7.7px;line-height:7.7px;color:#808080;transform:scaleX(1.1000);">2</span>
<span class="t" style="left:809.13px;transform-origin:50% 0;top:89.22px;font-size:7.3px;line-height:7.3px;color:#949494;">Fr</span>
<span class="t" style="left:824.92px;transform-origin:50% 0;top:47.88px;font-size:7.7px;line-height:7.7px;color:#808080;transform:scaleX(1.1000);">3</span>
<span class="t" style="left:822.60px;transform-origin:50% 0;top:89.22px;font-size:7.3px;line-height:7.3px;color:#949494;">Sa</span>
<span class="t" style="left:839.40px;transform-origin:50% 0;top:47.88px;font-size:7.7px;line-height:7.7px;color:#808080;transform:scaleX(1.1000);">4</span>
<span class="t" style="left:837.08px;transform-origin:50% 0;top:89.22px;font-size:7.3px;line-height:7.3px;color:#949494;">Su</span>
<span class="t" style="left:853.88px;transform-origin:50% 0;top:47.88px;font-size:7.7px;line-height:7.7px;color:#808080;transform:scaleX(1.1000);">5</span>
<span class="t" style="left:850.95px;transform-origin:50% 0;top:89.22px;font-size:7.3px;line-height:7.3px;color:#949494;">Mo</span>
<span class="t" style="left:882.76px;transform-origin:50% 0;top:101.30px;font-size:8.5px;line-height:8.5px;color:#4c4c4c;transform:scaleX(1.0500);">Week 32</span>
<span class="t" style="left:868.36px;transform-origin:50% 0;top:47.88px;font-size:7.7px;line-height:7.7px;color:#808080;transform:scaleX(1.1000);">6</span>
<span class="t" style="left:866.38px;transform-origin:50% 0;top:89.22px;font-size:7.3px;line-height:7.3px;color:#949494;">Tu</span>
<span class="t" style="left:882.84px;transform-origin:50% 0;top:47.88px;font-size:7.7px;line-height:7.7px;color:#808080;transform:scaleX(1.1000);">7</span>
<span class="t" style="left:879.57px;transform-origin:50% 0;top:89.22px;font-size:7.3px;line-height:7.3px;color:#949494;">We</span>
<span class="t" style="left:897.32px;transform-origin:50% 0;top:47.88px;font-size:7.7px;line-height:7.7px;color:#808080;transform:scaleX(1.1000);">8</span>
<span class="t" style="left:895.20px;transform-origin:50% 0;top:89.22px;font-size:7.3px;line-height:7.3px;color:#949494;">Th</span>
<span class="t" style="left:911.80px;transform-origin:50% 0;top:47.88px;font-size:7.7px;line-height:7.7px;color:#808080;transform:scaleX(1.1000);">9</span>
<span class="t" style="left:910.49px;transform-origin:50% 0;top:89.22px;font-size:7.3px;line-height:7.3px;color:#949494;">Fr</span>
<span class="t" style="left:924.14px;transform-origin:50% 0;top:47.88px;font-size:7.7px;line-height:7.7px;color:#808080;transform:scaleX(1.1000);">10</span>
<span class="t" style="left:923.96px;transform-origin:50% 0;top:89.22px;font-size:7.3px;line-height:7.3px;color:#949494;">Sa</span>
<span class="t" style="left:938.90px;transform-origin:50% 0;top:47.88px;font-size:7.7px;line-height:7.7px;color:#808080;transform:scaleX(1.1000);">11</span>
<span class="t" style="left:938.44px;transform-origin:50% 0;top:89.22px;font-size:7.3px;line-height:7.3px;color:#949494;">Su</span>
<span class="t" style="left:953.10px;transform-origin:50% 0;top:47.88px;font-size:7.7px;line-height:7.7px;color:#808080;transform:scaleX(1.1000);">12</span>
<span class="t" style="left:952.31px;transform-origin:50% 0;top:89.22px;font-size:7.3px;line-height:7.3px;color:#949494;">Mo</span>
<span class="t" style="left:984.12px;transform-origin:50% 0;top:101.30px;font-size:8.5px;line-height:8.5px;color:#4c4c4c;transform:scaleX(1.0500);">Week 33</span>
<span class="t" style="left:967.58px;transform-origin:50% 0;top:47.88px;font-size:7.7px;line-height:7.7px;color:#808080;transform:scaleX(1.1000);">13</span>
<span class="t" style="left:967.74px;transform-origin:50% 0;top:89.22px;font-size:7.3px;line-height:7.3px;color:#949494;">Tu</span>
<span class="t" style="left:982.06px;transform-origin:50% 0;top:47.88px;font-size:7.7px;line-height:7.7px;color:#808080;transform:scaleX(1.1000);">14</span>
<span class="t" style="left:980.93px;transform-origin:50% 0;top:89.22px;font-size:7.3px;line-height:7.3px;color:#949494;">We</span>
<span class="t" style="left:996.54px;transform-origin:50% 0;top:47.88px;font-size:7.7px;line-height:7.7px;color:#808080;transform:scaleX(1.1000);">15</span>
<span class="t" style="left:996.56px;transform-origin:50% 0;top:89.22px;font-size:7.3px;line-height:7.3px;color:#949494;">Th</span>
<span class="t" style="left:1011.02px;transform-origin:50% 0;top:47.88px;font-size:7.7px;line-height:7.7px;color:#808080;transform:scaleX(1.1000);">16</span>
<span class="t" style="left:1011.85px;transform-origin:50% 0;top:89.22px;font-size:7.3px;line-height:7.3px;color:#949494;">Fr</span>
<span class="t" style="left:1025.50px;transform-origin:50% 0;top:47.88px;font-size:7.7px;line-height:7.7px;color:#808080;transform:scaleX(1.1000);">17</span>
<span class="t" style="left:1025.32px;transform-origin:50% 0;top:89.22px;font-size:7.3px;line-height:7.3px;color:#949494;">Sa</span>
<span class="t" style="left:1039.98px;transform-origin:50% 0;top:47.88px;font-size:7.7px;line-height:7.7px;color:#808080;transform:scaleX(1.1000);">18</span>
<span class="t" style="left:1039.80px;transform-origin:50% 0;top:89.22px;font-size:7.3px;line-height:7.3px;color:#949494;">Su</span>
<span class="t" style="left:1054.46px;transform-origin:50% 0;top:47.88px;font-size:7.7px;line-height:7.7px;color:#808080;transform:scaleX(1.1000);">19</span>
<span class="t" style="left:1053.67px;transform-origin:50% 0;top:89.22px;font-size:7.3px;line-height:7.3px;color:#949494;">Mo</span>
<span class="t" style="left:1085.48px;transform-origin:50% 0;top:101.30px;font-size:8.5px;line-height:8.5px;color:#4c4c4c;transform:scaleX(1.0500);">Week 34</span>
<span class="t" style="left:1068.94px;transform-origin:50% 0;top:47.88px;font-size:7.7px;line-height:7.7px;color:#808080;transform:scaleX(1.1000);">20</span>
<span class="t" style="left:1069.10px;transform-origin:50% 0;top:89.22px;font-size:7.3px;line-height:7.3px;color:#949494;">Tu</span>
<span class="t" style="left:1083.42px;transform-origin:50% 0;top:47.88px;font-size:7.7px;line-height:7.7px;color:#808080;transform:scaleX(1.1000);">21</span>
<span class="t" style="left:1082.29px;transform-origin:50% 0;top:89.22px;font-size:7.3px;line-height:7.3px;color:#949494;">We</span>
<span class="t" style="left:1097.90px;transform-origin:50% 0;top:47.88px;font-size:7.7px;line-height:7.7px;color:#808080;transform:scaleX(1.1000);">22</span>
<span class="t" style="left:1097.92px;transform-origin:50% 0;top:89.22px;font-size:7.3px;line-height:7.3px;color:#949494;">Th</span>
<span class="t" style="left:1112.38px;transform-origin:50% 0;top:47.88px;font-size:7.7px;line-height:7.7px;color:#808080;transform:scaleX(1.1000);">23</span>
<span class="t" style="left:1113.21px;transform-origin:50% 0;top:89.22px;font-size:7.3px;line-height:7.3px;color:#949494;">Fr</span>
<span class="t" style="left:1126.86px;transform-origin:50% 0;top:47.88px;font-size:7.7px;line-height:7.7px;color:#808080;transform:scaleX(1.1000);">24</span>
<span class="t" style="left:1126.68px;transform-origin:50% 0;top:89.22px;font-size:7.3px;line-height:7.3px;color:#949494;">Sa</span>
<span class="t" style="left:102.54px;transform-origin:50% 0;top:31.98px;font-size:9px;line-height:9px;color:#fff;font-weight:bold;transform:scaleX(1.1700);">June 2019</span>
<span class="t" style="left:546.13px;transform-origin:50% 0;top:31.98px;font-size:9px;line-height:9px;color:#fff;font-weight:bold;transform:scaleX(1.1700);">July 2019</span>
<span class="t" style="left:988.84px;transform-origin:50% 0;top:31.98px;font-size:9px;line-height:9px;color:#fff;font-weight:bold;transform:scaleX(1.1700);">August 2019</span>
<span class="t" style="left:316.69px;transform-origin:100% 0;top:31.98px;font-size:9px;line-height:9px;color:#5f8fa2;font-weight:bold;transform:scaleX(1.1500);">June</span>
<span class="t" style="left:346.60px;transform-origin:0 0;top:31.98px;font-size:9px;line-height:9px;color:#5f8fa2;font-weight:bold;transform:scaleX(1.1500);">July</span>
<span class="t" style="left:768.79px;transform-origin:100% 0;top:31.98px;font-size:9px;line-height:9px;color:#5f8fa2;font-weight:bold;transform:scaleX(1.1500);">July</span>
<span class="t" style="left:796.00px;transform-origin:0 0;top:31.98px;font-size:9px;line-height:9px;color:#5f8fa2;font-weight:bold;transform:scaleX(1.1500);">August</span>
</div></div>
<div class="a" style="left:5.00px;top:112.60px;width:1127.50px;height:0.70px;background:#cfcfcf"></div>
<div class="a" style="left:5.00px;top:113.30px;width:1127.50px;height:10.40px;background:#e7e7e7"></div>
<div class="a" style="left:5.00px;top:123.70px;width:1127.50px;height:1.30px;background:#cbcbcb"></div>
<div class="a" style="left:5.00px;top:125.00px;width:1126.30px;height:10.40px;background:#e3e3e3"></div>
<div class="a" style="left:1131.30px;top:125.00px;width:1.20px;height:10.40px;background:#d2d2d2"></div>
<div class="a" style="left:641.70px;top:125.00px;width:212.20px;height:9.60px;background:linear-gradient(#2c6178,#0d4058);border-radius:0 0 1px 1px"></div>
<div class="a" style="left:557.60px;top:112.00px;width:18.00px;height:10.00px;background:rgba(236,236,236,.85);border-radius:0 0 4px 4px"></div>
<div class="a" style="left:556.70px;top:43.30px;width:19.90px;height:79.30px;border:1.2px solid rgba(150,150,150,.7);border-radius:4px;box-sizing:border-box;box-shadow:inset 0 0 0 1px rgba(245,245,245,.8)"></div>
<div class="a" style="left:559.00px;top:45.00px;width:15.10px;height:67.00px;border:1.2px solid rgba(150,150,150,.7);border-radius:2.5px;box-sizing:border-box"></div>
<div class="a" style="left:563.00px;top:114.60px;width:1.10px;height:6.40px;background:#8e8e8e"></div>
<div class="a" style="left:566.10px;top:114.60px;width:1.10px;height:6.40px;background:#8e8e8e"></div>
<div class="a" style="left:569.20px;top:114.60px;width:1.10px;height:6.40px;background:#8e8e8e"></div>
<div class="a" style="left:557.60px;top:76.00px;width:1.60px;height:8.00px;background:#aaa;border-radius:1px"></div>
<div class="a" style="left:574.00px;top:76.00px;width:1.60px;height:8.00px;background:#aaa;border-radius:1px"></div>
<div class="a" style="left:1132.50px;top:28.00px;width:109.50px;height:107.50px;background:#f2f2f2;border-left:1px solid #dcdcdc;box-sizing:border-box"></div>
<div class="a" style="left:1132.50px;top:27.00px;width:109.50px;height:1.20px;background:#1f5a72"></div>
<span class="t" style="left:1138.70px;transform-origin:0 0;top:30.98px;font-size:9.0px;line-height:9.0px;color:#4d7bb0;transform:scaleX(0.9668);">From</span>
<span class="t" style="left:1138.90px;transform-origin:0 0;top:42.12px;font-size:8.6px;line-height:8.6px;color:#555;transform:scaleX(1.1934);">2019-07-16 08:30:00</span>
<span class="t" style="left:1138.70px;transform-origin:0 0;top:55.78px;font-size:9.0px;line-height:9.0px;color:#4d7bb0;transform:scaleX(0.9153);">To</span>
<span class="t" style="left:1138.90px;transform-origin:0 0;top:66.62px;font-size:8.6px;line-height:8.6px;color:#555;transform:scaleX(1.1934);">2019-07-16 17:59:59</span>
<div class="a" style="left:1138.20px;top:81.40px;width:101.20px;height:24.20px;background:linear-gradient(#3a667c,#1c5068 45%,#063a52);border-radius:2.5px;box-shadow:0 0 0 .6px #fff"></div>
<div class="a" style="left:1138.20px;top:108.40px;width:101.20px;height:24.30px;background:linear-gradient(#3a667c,#1c5068 45%,#063a52);border-radius:2.5px;box-shadow:0 0 0 .6px #fff"></div>
<span class="t" style="left:1151.30px;transform-origin:0 0;top:90.25px;font-size:8.8px;line-height:8.8px;color:#fff;font-weight:bold;transform:scaleX(1.1737);">Set Time Range</span>
<span class="t" style="left:1163.80px;transform-origin:0 0;top:117.05px;font-size:8.8px;line-height:8.8px;color:#fff;font-weight:bold;transform:scaleX(1.1289);">Exceptions</span>
<div class="a" style="left:9.30px;top:164.00px;width:627.70px;height:199.80px;background:#eeeeee;border:1.8px solid #8f8f8f;border-bottom:2px solid #7d7d7d;border-top:none;border-radius:0 0 3.5px 3.5px;box-sizing:border-box;box-shadow:0 1px 2px rgba(0,0,0,.4)"></div>
<div class="a" style="left:10.00px;top:142.00px;width:626.30px;height:23.60px;background:linear-gradient(#35627a,#1d4f67 40%,#08374d 92%,#03222f);border-radius:3px 3px 0 0;box-shadow:1px 0 .8px rgba(0,0,0,.4)"></div>
<div class="a" style="left:14.70px;top:146.10px;width:16.60px;height:16.60px;border-radius:50%;background:rgba(255,255,255,.045);box-shadow:inset 0 0 0 1px rgba(0,20,30,.22)"></div>
<svg class="a" style="left:19.60px;top:152.20px" width="8" height="6"><path d="M0.3 0.2 L6.9 0.2 L3.6 4.8 Z" fill="#fff"/></svg>
<span class="t" style="left:36.80px;transform-origin:0 0;top:148.93px;font-size:11.9px;line-height:11.9px;color:#fff;font-weight:bold;transform:scaleX(1.2361);text-shadow:0 1px 1px rgba(0,0,0,.6);">Voice Queues</span>
<div class="a" style="left:613.70px;top:145.90px;width:18.60px;height:15.60px;border-radius:0 8px 8px 0;background:rgba(255,255,255,.06)"></div>
<svg class="a" style="left:616.50px;top:149.90px" width="8" height="8"><path d="M1.2 1.2 L6.8 6.8 M6.8 1.2 L1.2 6.8" stroke="#fff" stroke-width="1.75" stroke-linecap="butt"/></svg>
<div class="a" style="left:11.00px;top:165.60px;width:624.30px;height:20.60px;background:linear-gradient(#f0f0f0,#e0e0e0)"></div>
<div class="a" style="left:11.00px;top:165.60px;width:624.30px;height:1.00px;background:#fafafa"></div>
<div class="a btn" style="left:594.70px;top:168.60px;width:18px;height:15px"><svg width="18" height="15" viewBox="0 0 18 15" style="position:absolute;left:-1.7px;top:-1.7px"><defs><linearGradient id="fg" x1="0" y1="0" x2="0" y2="1"><stop offset="0" stop-color="#2a8fd0"/><stop offset="1" stop-color="#0a62a8"/></linearGradient></defs><path d="M4.9 4.4 C4.9 2.4 13.3 2.4 13.3 4.4 C13.3 6 10.6 7.4 10.5 9 L10.5 11.2 C10.5 11.9 7.9 11.9 7.9 11.2 L7.9 9 C7.8 7.4 4.9 6 4.9 4.4 Z" fill="url(#fg)"/><ellipse cx="9.1" cy="4.1" rx="3" ry="0.9" fill="#a8d8f0"/></svg></div>
<div class="a btn" style="left:614.90px;top:168.60px;width:18.6px;height:15px"><svg width="19" height="15" viewBox="0 0 19 15" style="position:absolute;left:-1.7px;top:-1.7px"><rect x="5.2" y="3.8" width="8" height="5.9" fill="#58acdc"/><rect x="6.2" y="4.9" width="6" height="3.8" fill="#dcf0fb"/><path d="M4.4 10.6 L11.4 10.6 L11.8 12.3 L4 12.3 Z" fill="#0b7cc4"/><path d="M12.6 6.6 h2 v3 h1.1 l-2.1 2.9 l-2.1 -2.9 h1.1 Z" fill="#0b78c0"/></svg></div>
<div class="a" style="left:11.20px;top:186.40px;width:624.00px;height:141.00px;overflow:hidden;background:#efefef"><div class="a" style="left:-11.20px;top:-186.40px;width:1309px;height:609px">
<div class="a" style="left:11.20px;top:186.40px;width:624.00px;height:17.60px;background:linear-gradient(#ededed,#dcdcdc);border-bottom:1px solid #cfcfcf;border-top:1px solid #d6d6d6;box-sizing:border-box"></div>
<span class="t" style="left:16.40px;transform-origin:0 0;top:191.55px;font-size:7.85px;line-height:7.85px;color:#5e5e5e;font-weight:bold;transform:scaleX(1.0111);text-shadow:0 1px 0 #fff;">Queue</span>
<div class="a" style="left:128.80px;top:186.40px;width:1.00px;height:17.60px;background:#cacaca"></div>
<span class="t" style="left:134.00px;transform-origin:0 0;top:191.55px;font-size:7.85px;line-height:7.85px;color:#5e5e5e;font-weight:bold;transform:scaleX(1.0134);text-shadow:0 1px 0 #fff;">Queued Call Count</span>
<div class="a" style="left:216.80px;top:186.40px;width:1.00px;height:17.60px;background:#cacaca"></div>
<span class="t" style="left:221.80px;transform-origin:0 0;top:191.55px;font-size:7.85px;line-height:7.85px;color:#5e5e5e;font-weight:bold;transform:scaleX(1.0128);text-shadow:0 1px 0 #fff;">Queued Calls Connected</span>
<div class="a" style="left:374.40px;top:186.40px;width:1.00px;height:17.60px;background:#cacaca"></div>
<span class="t" style="left:381.70px;transform-origin:0 0;top:191.55px;font-size:7.85px;line-height:7.85px;color:#5e5e5e;font-weight:bold;transform:scaleX(0.9973);text-shadow:0 1px 0 #fff;">Avg Speed to Answer</span>
<div class="a" style="left:519.10px;top:186.40px;width:1.00px;height:17.60px;background:#cacaca"></div>
<span class="t" style="left:523.60px;transform-origin:0 0;top:191.55px;font-size:7.85px;line-height:7.85px;color:#5e5e5e;font-weight:bold;text-shadow:0 1px 0 #fff;">Queued Calls Connected Inside SLA</span>
<div class="a" style="left:11.20px;top:204.00px;width:624.00px;height:18.45px;background:#ffffff;border-bottom:1px solid #e3e3e3;box-sizing:border-box"></div>
<span class="t" style="left:16.80px;transform-origin:0 0;top:209.26px;font-size:7.75px;line-height:7.75px;color:#1a83bd;text-decoration:underline;text-decoration-thickness:.8px;text-underline-offset:1px;text-decoration-color:#5b9cc4;">ALH Switchboard Q</span>
<div class="a" style="left:128.80px;top:204.00px;width:1.00px;height:18.45px;background:#dedede"></div>
<span class="t" style="left:134.80px;transform-origin:0 0;top:209.26px;font-size:7.75px;line-height:7.75px;color:#1a83bd;">2</span>
<div class="a" style="left:216.80px;top:204.00px;width:1.00px;height:18.45px;background:#dedede"></div>
<span class="t" style="left:222.80px;transform-origin:0 0;top:209.26px;font-size:7.75px;line-height:7.75px;color:#1a83bd;">2</span>
<div class="a" style="left:374.40px;top:204.00px;width:1.00px;height:18.45px;background:#dedede"></div>
<span class="t" style="left:380.40px;transform-origin:0 0;top:209.26px;font-size:7.75px;line-height:7.75px;color:#1a83bd;">256.46</span>
<div class="a" style="left:519.10px;top:204.00px;width:1.00px;height:18.45px;background:#dedede"></div>
<span class="t" style="left:525.10px;transform-origin:0 0;top:209.26px;font-size:7.75px;line-height:7.75px;color:#1a83bd;">0</span>
<div class="a" style="left:11.20px;top:222.45px;width:624.00px;height:17.65px;background:#fafafa;border-bottom:1px solid #e3e3e3;box-sizing:border-box"></div>
<span class="t" style="left:16.80px;transform-origin:0 0;top:226.91px;font-size:7.75px;line-height:7.75px;color:#1a83bd;text-decoration:underline;text-decoration-thickness:.8px;text-underline-offset:1px;text-decoration-color:#5b9cc4;">Monumental Customer Service</span>
<div class="a" style="left:128.80px;top:222.45px;width:1.00px;height:17.65px;background:#dedede"></div>
<span class="t" style="left:134.80px;transform-origin:0 0;top:226.91px;font-size:7.75px;line-height:7.75px;color:#1a83bd;">10</span>
<div class="a" style="left:216.80px;top:222.45px;width:1.00px;height:17.65px;background:#dedede"></div>
<span class="t" style="left:222.80px;transform-origin:0 0;top:226.91px;font-size:7.75px;line-height:7.75px;color:#1a83bd;">4</span>
<div class="a" style="left:374.40px;top:222.45px;width:1.00px;height:17.65px;background:#dedede"></div>
<span class="t" style="left:380.40px;transform-origin:0 0;top:226.91px;font-size:7.75px;line-height:7.75px;color:#1a83bd;">57.57</span>
<div class="a" style="left:519.10px;top:222.45px;width:1.00px;height:17.65px;background:#dedede"></div>
<span class="t" style="left:525.10px;transform-origin:0 0;top:226.91px;font-size:7.75px;line-height:7.75px;color:#1a83bd;">3</span>
<div class="a" style="left:11.20px;top:240.10px;width:624.00px;height:17.65px;background:#ffffff;border-bottom:1px solid #e3e3e3;box-sizing:border-box"></div>
<span class="t" style="left:16.80px;transform-origin:0 0;top:244.56px;font-size:7.75px;line-height:7.75px;color:#1a83bd;text-decoration:underline;text-decoration-thickness:.8px;text-underline-offset:1px;text-decoration-color:#5b9cc4;">Monumental General Holidays</span>
<div class="a" style="left:128.80px;top:240.10px;width:1.00px;height:17.65px;background:#dedede"></div>
<span class="t" style="left:134.80px;transform-origin:0 0;top:244.56px;font-size:7.75px;line-height:7.75px;color:#1a83bd;">6</span>
<div class="a" style="left:216.80px;top:240.10px;width:1.00px;height:17.65px;background:#dedede"></div>
<span class="t" style="left:222.80px;transform-origin:0 0;top:244.56px;font-size:7.75px;line-height:7.75px;color:#1a83bd;">4</span>
<div class="a" style="left:374.40px;top:240.10px;width:1.00px;height:17.65px;background:#dedede"></div>
<span class="t" style="left:380.40px;transform-origin:0 0;top:244.56px;font-size:7.75px;line-height:7.75px;color:#1a83bd;">32.74</span>
<div class="a" style="left:519.10px;top:240.10px;width:1.00px;height:17.65px;background:#dedede"></div>
<span class="t" style="left:525.10px;transform-origin:0 0;top:244.56px;font-size:7.75px;line-height:7.75px;color:#1a83bd;">2</span>
<div class="a" style="left:11.20px;top:257.75px;width:624.00px;height:17.65px;background:#fafafa;border-bottom:1px solid #e3e3e3;box-sizing:border-box"></div>
<span class="t" style="left:16.80px;transform-origin:0 0;top:262.21px;font-size:7.75px;line-height:7.75px;color:#1a83bd;text-decoration:underline;text-decoration-thickness:.8px;text-underline-offset:1px;text-decoration-color:#5b9cc4;">Monumental Summer Holidays</span>
<div class="a" style="left:128.80px;top:257.75px;width:1.00px;height:17.65px;background:#dedede"></div>
<span class="t" style="left:134.80px;transform-origin:0 0;top:262.21px;font-size:7.75px;line-height:7.75px;color:#1a83bd;">5</span>
<div class="a" style="left:216.80px;top:257.75px;width:1.00px;height:17.65px;background:#dedede"></div>
<span class="t" style="left:222.80px;transform-origin:0 0;top:262.21px;font-size:7.75px;line-height:7.75px;color:#1a83bd;">3</span>
<div class="a" style="left:374.40px;top:257.75px;width:1.00px;height:17.65px;background:#dedede"></div>
<span class="t" style="left:380.40px;transform-origin:0 0;top:262.21px;font-size:7.75px;line-height:7.75px;color:#1a83bd;">35.73</span>
<div class="a" style="left:519.10px;top:257.75px;width:1.00px;height:17.65px;background:#dedede"></div>
<span class="t" style="left:525.10px;transform-origin:0 0;top:262.21px;font-size:7.75px;line-height:7.75px;color:#1a83bd;">2</span>
<div class="a" style="left:11.20px;top:275.40px;width:624.00px;height:17.65px;background:#ffffff;border-bottom:1px solid #e3e3e3;box-sizing:border-box"></div>
<div class="a" style="left:128.80px;top:275.40px;width:1.00px;height:17.65px;background:#dedede"></div>
<span class="t" style="left:134.80px;transform-origin:0 0;top:279.86px;font-size:7.75px;line-height:7.75px;color:#666;">23</span>
<div class="a" style="left:216.80px;top:275.40px;width:1.00px;height:17.65px;background:#dedede"></div>
<span class="t" style="left:222.80px;transform-origin:0 0;top:279.86px;font-size:7.75px;line-height:7.75px;color:#666;">13</span>
<div class="a" style="left:374.40px;top:275.40px;width:1.00px;height:17.65px;background:#dedede"></div>
<span class="t" style="left:380.40px;transform-origin:0 0;top:279.86px;font-size:7.75px;line-height:7.75px;color:#666;">75.49</span>
<div class="a" style="left:519.10px;top:275.40px;width:1.00px;height:17.65px;background:#dedede"></div>
<span class="t" style="left:525.10px;transform-origin:0 0;top:279.86px;font-size:7.75px;line-height:7.75px;color:#666;">7</span>
</div></div>
<div class="a" style="left:11.20px;top:326.80px;width:624.00px;height:14.60px;background:#f1f1f1"></div>
<div class="a" style="left:26.50px;top:329.00px;width:143.90px;height:10.20px;background:#c1c1c1"></div>
<svg class="a" style="left:11.20px;top:326.80px" width="624.00" height="14.6"><path d="M9.6 4.3 L9.6 10.3 L6 7.3 Z" fill="#a3a3a3"/><path d="M614.6 4.1 L614.6 10.5 L618.4 7.3 Z" fill="#4a4a4a"/></svg>
<div class="a" style="left:11.20px;top:341.40px;width:624.00px;height:20.60px;background:linear-gradient(#ececec,#dcdcdc);border-top:1px solid #d2d2d2;box-sizing:border-box;border-radius:0 0 2px 2px"></div>
<div class="a" style="left:592.40px;top:344.40px;width:40.4px;height:14px;border:1px solid #bdbdbd;border-radius:2.5px;background:linear-gradient(#e9e9e9,#d6d6d6);box-sizing:border-box"></div>
<div class="a" style="left:612.10px;top:345.40px;width:1.00px;height:12.00px;background:#bcbcbc"></div>
<svg class="a" style="left:592.40px;top:344.40px" width="40.4" height="14"><path d="M13.7 3.4 L13.7 10.6 L5.8999999999999995 7 Z" fill="#c4c4c4"/><path d="M26.499999999999996 3.4 L26.499999999999996 10.6 L34.3 7 Z" fill="#c2c2c2"/></svg>
<div class="a" style="left:302.00px;top:358.20px;width:18.00px;height:1.00px;background:#d4d4d4"></div>
<div class="a" style="left:640.80px;top:164.00px;width:597.30px;height:199.80px;background:#eeeeee;border:1.8px solid #8f8f8f;border-bottom:2px solid #7d7d7d;border-top:none;border-radius:0 0 3.5px 3.5px;box-sizing:border-box;box-shadow:0 1px 2px rgba(0,0,0,.4)"></div>
<div class="a" style="left:641.50px;top:142.00px;width:595.90px;height:23.60px;background:linear-gradient(#35627a,#1d4f67 40%,#08374d 92%,#03222f);border-radius:3px 3px 0 0;box-shadow:1px 0 .8px rgba(0,0,0,.4)"></div>
<div class="a" style="left:646.20px;top:146.10px;width:16.60px;height:16.60px;border-radius:50%;background:rgba(255,255,255,.045);box-shadow:inset 0 0 0 1px rgba(0,20,30,.22)"></div>
<svg class="a" style="left:651.10px;top:152.20px" width="8" height="6"><path d="M0.3 0.2 L6.9 0.2 L3.6 4.8 Z" fill="#fff"/></svg>
<span class="t" style="left:668.30px;transform-origin:0 0;top:148.93px;font-size:11.9px;line-height:11.9px;color:#fff;font-weight:bold;transform:scaleX(1.2260);text-shadow:0 1px 1px rgba(0,0,0,.6);">Agent Productivity</span>
<div class="a" style="left:1214.80px;top:145.90px;width:18.60px;height:15.60px;border-radius:0 8px 8px 0;background:rgba(255,255,255,.06)"></div>
<svg class="a" style="left:1217.60px;top:149.90px" width="8" height="8"><path d="M1.2 1.2 L6.8 6.8 M6.8 1.2 L1.2 6.8" stroke="#fff" stroke-width="1.75" stroke-linecap="butt"/></svg>
<div class="a" style="left:642.50px;top:165.60px;width:593.90px;height:20.60px;background:linear-gradient(#f0f0f0,#e0e0e0)"></div>
<div class="a" style="left:642.50px;top:165.60px;width:593.90px;height:1.00px;background:#fafafa"></div>
<div class="a btn" style="left:1216.00px;top:169.00px;width:18.6px;height:15px"><svg width="19" height="15" viewBox="0 0 19 15" style="position:absolute;left:-1.7px;top:-1.7px"><rect x="5.2" y="3.8" width="8" height="5.9" fill="#58acdc"/><rect x="6.2" y="4.9" width="6" height="3.8" fill="#dcf0fb"/><path d="M4.4 10.6 L11.4 10.6 L11.8 12.3 L4 12.3 Z" fill="#0b7cc4"/><path d="M12.6 6.6 h2 v3 h1.1 l-2.1 2.9 l-2.1 -2.9 h1.1 Z" fill="#0b78c0"/></svg></div>
<div class="a" style="left:642.70px;top:186.40px;width:593.60px;height:140.40px;overflow:hidden;background:#efefef"><div class="a" style="left:-642.70px;top:-186.40px;width:1309px;height:609px">
<div class="a" style="left:642.70px;top:186.40px;width:593.60px;height:17.60px;background:linear-gradient(#ededed,#dcdcdc);border-bottom:1px solid #cfcfcf;border-top:1px solid #d6d6d6;box-sizing:border-box"></div>
<span class="t" style="left:648.60px;transform-origin:0 0;top:191.94px;font-size:8.1px;line-height:8.1px;color:#555;font-weight:bold;transform:scaleX(1.0458);text-shadow:0 1px 0 #fff;">Agent</span>
<div class="a" style="left:716.70px;top:186.40px;width:1.00px;height:17.60px;background:#cacaca"></div>
<span class="t" style="left:721.00px;transform-origin:0 0;top:191.94px;font-size:8.1px;line-height:8.1px;color:#555;font-weight:bold;transform:scaleX(1.0667);text-shadow:0 1px 0 #fff;">First Log-on Time</span>
<div class="a" style="left:820.00px;top:186.40px;width:1.00px;height:17.60px;background:#cacaca"></div>
<span class="t" style="left:826.30px;transform-origin:0 0;top:191.94px;font-size:8.1px;line-height:8.1px;color:#555;font-weight:bold;transform:scaleX(1.0708);text-shadow:0 1px 0 #fff;">Last Log-off Time</span>
<div class="a" style="left:922.30px;top:186.40px;width:1.00px;height:17.60px;background:#cacaca"></div>
<span class="t" style="left:928.60px;transform-origin:0 0;top:191.94px;font-size:8.1px;line-height:8.1px;color:#555;font-weight:bold;transform:scaleX(1.0716);text-shadow:0 1px 0 #fff;">Total Logged On Duration</span>
<div class="a" style="left:1100.80px;top:186.40px;width:1.00px;height:17.60px;background:#cacaca"></div>
<span class="t" style="left:1106.80px;transform-origin:0 0;top:191.94px;font-size:8.1px;line-height:8.1px;color:#555;font-weight:bold;transform:scaleX(1.0916);text-shadow:0 1px 0 #fff;">Total Available Duration</span>
<div class="a" style="left:642.70px;top:204.00px;width:593.60px;height:17.75px;background:#ffffff;border-bottom:1px solid #e3e3e3;box-sizing:border-box"></div>
<span class="t" style="left:648.30px;transform-origin:0 0;top:209.21px;font-size:7.75px;line-height:7.75px;color:#1a83bd;">Aamir Khan</span>
<div class="a" style="left:716.70px;top:204.00px;width:1.00px;height:17.75px;background:#dedede"></div>
<span class="t" style="left:722.70px;transform-origin:0 0;top:209.21px;font-size:7.75px;line-height:7.75px;color:#1a83bd;">2019-07-16 10:11:42</span>
<div class="a" style="left:820.00px;top:204.00px;width:1.00px;height:17.75px;background:#dedede"></div>
<span class="t" style="left:826.00px;transform-origin:0 0;top:209.21px;font-size:7.75px;line-height:7.75px;color:#1a83bd;">2019-07-16 10:16:51</span>
<div class="a" style="left:922.30px;top:204.00px;width:1.00px;height:17.75px;background:#dedede"></div>
<span class="t" style="left:928.30px;transform-origin:0 0;top:209.21px;font-size:7.75px;line-height:7.75px;color:#1a83bd;">7:00:17</span>
<div class="a" style="left:1100.80px;top:204.00px;width:1.00px;height:17.75px;background:#dedede"></div>
<span class="t" style="left:1106.80px;transform-origin:0 0;top:209.21px;font-size:7.75px;line-height:7.75px;color:#1a83bd;">6:55:55</span>
<div class="a" style="left:642.70px;top:221.75px;width:593.60px;height:17.75px;background:#fafafa;border-bottom:1px solid #e3e3e3;box-sizing:border-box"></div>
<span class="t" style="left:648.30px;transform-origin:0 0;top:226.96px;font-size:7.75px;line-height:7.75px;color:#1a83bd;">Craig Miliband</span>
<div class="a" style="left:716.70px;top:221.75px;width:1.00px;height:17.75px;background:#dedede"></div>
<span class="t" style="left:722.70px;transform-origin:0 0;top:226.96px;font-size:7.75px;line-height:7.75px;color:#1a83bd;">2019-07-16 10:37:13</span>
<div class="a" style="left:820.00px;top:221.75px;width:1.00px;height:17.75px;background:#dedede"></div>
<span class="t" style="left:826.00px;transform-origin:0 0;top:226.96px;font-size:7.75px;line-height:7.75px;color:#1a83bd;">2019-07-16 17:43:23</span>
<div class="a" style="left:922.30px;top:221.75px;width:1.00px;height:17.75px;background:#dedede"></div>
<span class="t" style="left:928.30px;transform-origin:0 0;top:226.96px;font-size:7.75px;line-height:7.75px;color:#1a83bd;">7:06:09</span>
<div class="a" style="left:1100.80px;top:221.75px;width:1.00px;height:17.75px;background:#dedede"></div>
<span class="t" style="left:1106.80px;transform-origin:0 0;top:226.96px;font-size:7.75px;line-height:7.75px;color:#1a83bd;">5:27:02</span>
<div class="a" style="left:642.70px;top:239.50px;width:593.60px;height:17.75px;background:#ffffff;border-bottom:1px solid #e3e3e3;box-sizing:border-box"></div>
<span class="t" style="left:648.30px;transform-origin:0 0;top:244.71px;font-size:7.75px;line-height:7.75px;color:#1a83bd;">Derek Flint</span>
<div class="a" style="left:716.70px;top:239.50px;width:1.00px;height:17.75px;background:#dedede"></div>
<span class="t" style="left:722.70px;transform-origin:0 0;top:244.71px;font-size:7.75px;line-height:7.75px;color:#1a83bd;">2019-07-16 17:46:40</span>
<div class="a" style="left:820.00px;top:239.50px;width:1.00px;height:17.75px;background:#dedede"></div>
<div class="a" style="left:922.30px;top:239.50px;width:1.00px;height:17.75px;background:#dedede"></div>
<span class="t" style="left:928.30px;transform-origin:0 0;top:244.71px;font-size:7.75px;line-height:7.75px;color:#1a83bd;">0:13:19</span>
<div class="a" style="left:1100.80px;top:239.50px;width:1.00px;height:17.75px;background:#dedede"></div>
<span class="t" style="left:1106.80px;transform-origin:0 0;top:244.71px;font-size:7.75px;line-height:7.75px;color:#1a83bd;">0:01:43</span>
<div class="a" style="left:642.70px;top:257.25px;width:593.60px;height:17.75px;background:#fafafa;border-bottom:1px solid #e3e3e3;box-sizing:border-box"></div>
<span class="t" style="left:648.30px;transform-origin:0 0;top:262.46px;font-size:7.75px;line-height:7.75px;color:#1a83bd;">Edward Redwood</span>
<div class="a" style="left:716.70px;top:257.25px;width:1.00px;height:17.75px;background:#dedede"></div>
<span class="t" style="left:722.70px;transform-origin:0 0;top:262.46px;font-size:7.75px;line-height:7.75px;color:#1a83bd;">2019-07-16 09:21:56</span>
<div class="a" style="left:820.00px;top:257.25px;width:1.00px;height:17.75px;background:#dedede"></div>
<span class="t" style="left:826.00px;transform-origin:0 0;top:262.46px;font-size:7.75px;line-height:7.75px;color:#1a83bd;">2019-07-16 17:39:11</span>
<div class="a" style="left:922.30px;top:257.25px;width:1.00px;height:17.75px;background:#dedede"></div>
<span class="t" style="left:928.30px;transform-origin:0 0;top:262.46px;font-size:7.75px;line-height:7.75px;color:#1a83bd;">8:17:15</span>
<div class="a" style="left:1100.80px;top:257.25px;width:1.00px;height:17.75px;background:#dedede"></div>
<span class="t" style="left:1106.80px;transform-origin:0 0;top:262.46px;font-size:7.75px;line-height:7.75px;color:#1a83bd;">4:34:52</span>
<div class="a" style="left:642.70px;top:275.00px;width:593.60px;height:17.75px;background:#ffffff;border-bottom:1px solid #e3e3e3;box-sizing:border-box"></div>
<span class="t" style="left:648.30px;transform-origin:0 0;top:280.21px;font-size:7.75px;line-height:7.75px;color:#1a83bd;">Jack Humperdinck</span>
<div class="a" style="left:716.70px;top:275.00px;width:1.00px;height:17.75px;background:#dedede"></div>
<span class="t" style="left:722.70px;transform-origin:0 0;top:280.21px;font-size:7.75px;line-height:7.75px;color:#1a83bd;">2019-07-16 10:38:43</span>
<div class="a" style="left:820.00px;top:275.00px;width:1.00px;height:17.75px;background:#dedede"></div>
<span class="t" style="left:826.00px;transform-origin:0 0;top:280.21px;font-size:7.75px;line-height:7.75px;color:#1a83bd;">2019-07-16 17:44:18</span>
<div class="a" style="left:922.30px;top:275.00px;width:1.00px;height:17.75px;background:#dedede"></div>
<span class="t" style="left:928.30px;transform-origin:0 0;top:280.21px;font-size:7.75px;line-height:7.75px;color:#1a83bd;">7:05:35</span>
<div class="a" style="left:1100.80px;top:275.00px;width:1.00px;height:17.75px;background:#dedede"></div>
<span class="t" style="left:1106.80px;transform-origin:0 0;top:280.21px;font-size:7.75px;line-height:7.75px;color:#1a83bd;">6:56:28</span>
<div class="a" style="left:642.70px;top:292.75px;width:593.60px;height:17.75px;background:#fafafa;border-bottom:1px solid #e3e3e3;box-sizing:border-box"></div>
<span class="t" style="left:648.30px;transform-origin:0 0;top:297.96px;font-size:7.75px;line-height:7.75px;color:#1a83bd;">Scott Fulton</span>
<div class="a" style="left:716.70px;top:292.75px;width:1.00px;height:17.75px;background:#dedede"></div>
<div class="a" style="left:820.00px;top:292.75px;width:1.00px;height:17.75px;background:#dedede"></div>
<div class="a" style="left:922.30px;top:292.75px;width:1.00px;height:17.75px;background:#dedede"></div>
<span class="t" style="left:928.30px;transform-origin:0 0;top:297.96px;font-size:7.75px;line-height:7.75px;color:#1a83bd;">0:00:00</span>
<div class="a" style="left:1100.80px;top:292.75px;width:1.00px;height:17.75px;background:#dedede"></div>
<span class="t" style="left:1106.80px;transform-origin:0 0;top:297.96px;font-size:7.75px;line-height:7.75px;color:#1a83bd;">0:00:00</span>
<div class="a" style="left:642.70px;top:310.50px;width:593.60px;height:17.75px;background:#ffffff;border-bottom:1px solid #e3e3e3;box-sizing:border-box"></div>
<span class="t" style="left:648.30px;transform-origin:0 0;top:315.71px;font-size:7.75px;line-height:7.75px;color:#1a83bd;">Stephen Dodd</span>
<div class="a" style="left:716.70px;top:310.50px;width:1.00px;height:17.75px;background:#dedede"></div>
<span class="t" style="left:722.70px;transform-origin:0 0;top:315.71px;font-size:7.75px;line-height:7.75px;color:#1a83bd;">2019-07-16 10:34:39</span>
<div class="a" style="left:820.00px;top:310.50px;width:1.00px;height:17.75px;background:#dedede"></div>
<span class="t" style="left:826.00px;transform-origin:0 0;top:315.71px;font-size:7.75px;line-height:7.75px;color:#1a83bd;">2019-07-16 17:42:08</span>
<div class="a" style="left:922.30px;top:310.50px;width:1.00px;height:17.75px;background:#dedede"></div>
<span class="t" style="left:928.30px;transform-origin:0 0;top:315.71px;font-size:7.75px;line-height:7.75px;color:#1a83bd;">7:07:29</span>
<div class="a" style="left:1100.80px;top:310.50px;width:1.00px;height:17.75px;background:#dedede"></div>
<span class="t" style="left:1106.80px;transform-origin:0 0;top:315.71px;font-size:7.75px;line-height:7.75px;color:#1a83bd;">5:58:44</span>
</div></div>
<div class="a" style="left:642.70px;top:326.80px;width:593.60px;height:14.60px;background:#f1f1f1"></div>
<div class="a" style="left:658.20px;top:329.00px;width:345.50px;height:10.20px;background:#c1c1c1"></div>
<svg class="a" style="left:642.70px;top:326.80px" width="593.60" height="14.6"><path d="M9.6 4.3 L9.6 10.3 L6 7.3 Z" fill="#a3a3a3"/><path d="M584.2 4.1 L584.2 10.5 L588.0 7.3 Z" fill="#4a4a4a"/></svg>
<div class="a" style="left:642.70px;top:341.40px;width:593.60px;height:20.60px;background:linear-gradient(#ececec,#dcdcdc);border-top:1px solid #d2d2d2;box-sizing:border-box;border-radius:0 0 2px 2px"></div>
<div class="a" style="left:1193.30px;top:345.20px;width:40.4px;height:14px;border:1px solid #bdbdbd;border-radius:2.5px;background:linear-gradient(#e9e9e9,#d6d6d6);box-sizing:border-box"></div>
<div class="a" style="left:1213.00px;top:346.20px;width:1.00px;height:12.00px;background:#bcbcbc"></div>
<svg class="a" style="left:1193.30px;top:345.20px" width="40.4" height="14"><path d="M13.7 3.4 L13.7 10.6 L5.8999999999999995 7 Z" fill="#c4c4c4"/><path d="M26.499999999999996 3.4 L26.499999999999996 10.6 L34.3 7 Z" fill="#8d8d8d"/></svg>
<span class="t" style="left:1063.00px;transform-origin:0 0;top:349.02px;font-size:8.6px;line-height:8.6px;color:#6a6a6a;transform:scaleX(1.1209);">Showing records</span>
<span class="t" style="left:1138.60px;transform-origin:0 0;top:349.02px;font-size:8.6px;line-height:8.6px;color:#555;font-weight:bold;transform:scaleX(1.1500);">1</span>
<span class="t" style="left:1147.90px;transform-origin:0 0;top:349.02px;font-size:8.6px;line-height:8.6px;color:#6a6a6a;transform:scaleX(1.1200);">to</span>
<span class="t" style="left:1160.00px;transform-origin:0 0;top:349.02px;font-size:8.6px;line-height:8.6px;color:#555;font-weight:bold;transform:scaleX(1.1500);">7</span>
<span class="t" style="left:1168.80px;transform-origin:0 0;top:349.02px;font-size:8.6px;line-height:8.6px;color:#6a6a6a;transform:scaleX(1.1433);">of 8</span>
<div class="a" style="left:932.00px;top:358.20px;width:18.00px;height:1.00px;background:#d4d4d4"></div>
<div class="a" style="left:640.80px;top:392.20px;width:597.30px;height:212.20px;background:#eeeeee;border:1.8px solid #8f8f8f;border-bottom:2px solid #7d7d7d;border-top:none;border-radius:0 0 3.5px 3.5px;box-sizing:border-box;box-shadow:0 1px 2px rgba(0,0,0,.4)"></div>
<div class="a" style="left:641.50px;top:370.20px;width:595.90px;height:23.60px;background:linear-gradient(#35627a,#1d4f67 40%,#08374d 92%,#03222f);border-radius:3px 3px 0 0;box-shadow:1px 0 .8px rgba(0,0,0,.4)"></div>
<div class="a" style="left:646.20px;top:374.30px;width:16.60px;height:16.60px;border-radius:50%;background:rgba(255,255,255,.045);box-shadow:inset 0 0 0 1px rgba(0,20,30,.22)"></div>
<svg class="a" style="left:651.10px;top:380.40px" width="8" height="6"><path d="M0.3 0.2 L6.9 0.2 L3.6 4.8 Z" fill="#fff"/></svg>
<span class="t" style="left:668.30px;transform-origin:0 0;top:377.13px;font-size:11.9px;line-height:11.9px;color:#fff;font-weight:bold;transform:scaleX(1.2498);text-shadow:0 1px 1px rgba(0,0,0,.6);">Agent Performance</span>
<div class="a" style="left:1214.80px;top:374.10px;width:18.60px;height:15.60px;border-radius:0 8px 8px 0;background:rgba(255,255,255,.06)"></div>
<svg class="a" style="left:1217.60px;top:378.10px" width="8" height="8"><path d="M1.2 1.2 L6.8 6.8 M6.8 1.2 L1.2 6.8" stroke="#fff" stroke-width="1.75" stroke-linecap="butt"/></svg>
<div class="a" style="left:642.50px;top:393.80px;width:593.90px;height:20.60px;background:linear-gradient(#f0f0f0,#e0e0e0)"></div>
<div class="a" style="left:642.50px;top:393.80px;width:593.90px;height:1.00px;background:#fafafa"></div>
<div class="a btn" style="left:1195.30px;top:397.20px;width:18px;height:15px"><svg width="18" height="15" viewBox="0 0 18 15" style="position:absolute;left:-1.7px;top:-1.7px"><defs><linearGradient id="fg" x1="0" y1="0" x2="0" y2="1"><stop offset="0" stop-color="#2a8fd0"/><stop offset="1" stop-color="#0a62a8"/></linearGradient></defs><path d="M4.9 4.4 C4.9 2.4 13.3 2.4 13.3 4.4 C13.3 6 10.6 7.4 10.5 9 L10.5 11.2 C10.5 11.9 7.9 11.9 7.9 11.2 L7.9 9 C7.8 7.4 4.9 6 4.9 4.4 Z" fill="url(#fg)"/><ellipse cx="9.1" cy="4.1" rx="3" ry="0.9" fill="#a8d8f0"/></svg></div>
<div class="a btn" style="left:1215.60px;top:397.20px;width:18.6px;height:15px"><svg width="19" height="15" viewBox="0 0 19 15" style="position:absolute;left:-1.7px;top:-1.7px"><rect x="5.2" y="3.8" width="8" height="5.9" fill="#58acdc"/><rect x="6.2" y="4.9" width="6" height="3.8" fill="#dcf0fb"/><path d="M4.4 10.6 L11.4 10.6 L11.8 12.3 L4 12.3 Z" fill="#0b7cc4"/><path d="M12.6 6.6 h2 v3 h1.1 l-2.1 2.9 l-2.1 -2.9 h1.1 Z" fill="#0b78c0"/></svg></div>
<div class="a" style="left:642.70px;top:414.80px;width:593.60px;height:151.40px;overflow:hidden;background:#efefef"><div class="a" style="left:-642.70px;top:-414.80px;width:1309px;height:609px">
<div class="a" style="left:642.70px;top:414.80px;width:593.60px;height:17.80px;background:linear-gradient(#ededed,#dcdcdc);border-bottom:1px solid #cfcfcf;border-top:1px solid #d6d6d6;box-sizing:border-box"></div>
<span class="t" style="left:649.10px;transform-origin:0 0;top:419.65px;font-size:7.85px;line-height:7.85px;color:#5e5e5e;font-weight:bold;transform:scaleX(1.0060);text-shadow:0 1px 0 #fff;">Local Agent</span>
<div class="a" style="left:716.70px;top:414.80px;width:1.00px;height:17.80px;background:#cacaca"></div>
<span class="t" style="left:721.70px;transform-origin:0 0;top:419.65px;font-size:7.85px;line-height:7.85px;color:#5e5e5e;font-weight:bold;transform:scaleX(1.0085);text-shadow:0 1px 0 #fff;">Avg Agent Ringing Duration</span>
<div class="a" style="left:834.60px;top:414.80px;width:1.00px;height:17.80px;background:#cacaca"></div>
<span class="t" style="left:840.20px;transform-origin:0 0;top:419.65px;font-size:7.85px;line-height:7.85px;color:#5e5e5e;font-weight:bold;transform:scaleX(1.0032);text-shadow:0 1px 0 #fff;">Shortest Agent Ringing Duration</span>
<div class="a" style="left:989.90px;top:414.80px;width:1.00px;height:17.80px;background:#cacaca"></div>
<span class="t" style="left:995.90px;transform-origin:0 0;top:419.65px;font-size:7.85px;line-height:7.85px;color:#5e5e5e;font-weight:bold;transform:scaleX(1.0066);text-shadow:0 1px 0 #fff;">Longest Agent Ringing Duration</span>
<div class="a" style="left:1129.30px;top:414.80px;width:1.00px;height:17.80px;background:#cacaca"></div>
<span class="t" style="left:1134.30px;transform-origin:0 0;top:419.65px;font-size:7.85px;line-height:7.85px;color:#5e5e5e;font-weight:bold;transform:scaleX(1.0090);text-shadow:0 1px 0 #fff;">Incoming Calls Offered</span>
<div class="a" style="left:642.70px;top:432.60px;width:593.60px;height:18.60px;background:#ffffff;border-bottom:1px solid #e3e3e3;box-sizing:border-box"></div>
<span class="t" style="left:648.30px;transform-origin:0 0;top:437.89px;font-size:7.75px;line-height:7.75px;color:#1a83bd;">Aamir Khan</span>
<div class="a" style="left:716.70px;top:432.60px;width:1.00px;height:18.60px;background:#dedede"></div>
<div class="a" style="left:834.60px;top:432.60px;width:1.00px;height:18.60px;background:#dedede"></div>
<div class="a" style="left:989.90px;top:432.60px;width:1.00px;height:18.60px;background:#dedede"></div>
<div class="a" style="left:1129.30px;top:432.60px;width:1.00px;height:18.60px;background:#dedede"></div>
<span class="t" style="left:1135.30px;transform-origin:0 0;top:437.89px;font-size:7.75px;line-height:7.75px;color:#1a83bd;">0</span>
<div class="a" style="left:642.70px;top:451.20px;width:593.60px;height:17.70px;background:#fafafa;border-bottom:1px solid #e3e3e3;box-sizing:border-box"></div>
<span class="t" style="left:648.30px;transform-origin:0 0;top:455.59px;font-size:7.75px;line-height:7.75px;color:#1a83bd;">Craig Miliband</span>
<div class="a" style="left:716.70px;top:451.20px;width:1.00px;height:17.70px;background:#dedede"></div>
<span class="t" style="left:722.70px;transform-origin:0 0;top:455.59px;font-size:7.75px;line-height:7.75px;color:#1a83bd;">7.30</span>
<div class="a" style="left:834.60px;top:451.20px;width:1.00px;height:17.70px;background:#dedede"></div>
<span class="t" style="left:840.60px;transform-origin:0 0;top:455.59px;font-size:7.75px;line-height:7.75px;color:#1a83bd;">6.50</span>
<div class="a" style="left:989.90px;top:451.20px;width:1.00px;height:17.70px;background:#dedede"></div>
<span class="t" style="left:995.90px;transform-origin:0 0;top:455.59px;font-size:7.75px;line-height:7.75px;color:#1a83bd;">8.10</span>
<div class="a" style="left:1129.30px;top:451.20px;width:1.00px;height:17.70px;background:#dedede"></div>
<span class="t" style="left:1135.30px;transform-origin:0 0;top:455.59px;font-size:7.75px;line-height:7.75px;color:#1a83bd;">2</span>
<div class="a" style="left:642.70px;top:468.90px;width:593.60px;height:17.70px;background:#ffffff;border-bottom:1px solid #e3e3e3;box-sizing:border-box"></div>
<span class="t" style="left:648.30px;transform-origin:0 0;top:473.29px;font-size:7.75px;line-height:7.75px;color:#1a83bd;">Derek Flint</span>
<div class="a" style="left:716.70px;top:468.90px;width:1.00px;height:17.70px;background:#dedede"></div>
<span class="t" style="left:722.70px;transform-origin:0 0;top:472.69px;font-size:7.75px;line-height:7.75px;color:#1a83bd;">5.30</span>
<div class="a" style="left:834.60px;top:468.90px;width:1.00px;height:17.70px;background:#dedede"></div>
<span class="t" style="left:840.60px;transform-origin:0 0;top:473.29px;font-size:7.75px;line-height:7.75px;color:#1a83bd;">4.60</span>
<div class="a" style="left:989.90px;top:468.90px;width:1.00px;height:17.70px;background:#dedede"></div>
<span class="t" style="left:995.90px;transform-origin:0 0;top:473.29px;font-size:7.75px;line-height:7.75px;color:#1a83bd;">6.10</span>
<div class="a" style="left:1129.30px;top:468.90px;width:1.00px;height:17.70px;background:#dedede"></div>
<span class="t" style="left:1135.30px;transform-origin:0 0;top:473.29px;font-size:7.75px;line-height:7.75px;color:#1a83bd;">0</span>
<div class="a" style="left:642.70px;top:486.60px;width:593.60px;height:17.70px;background:#fafafa;border-bottom:1px solid #e3e3e3;box-sizing:border-box"></div>
<span class="t" style="left:648.30px;transform-origin:0 0;top:490.99px;font-size:7.75px;line-height:7.75px;color:#1a83bd;">Edward Redwood</span>
<div class="a" style="left:716.70px;top:486.60px;width:1.00px;height:17.70px;background:#dedede"></div>
<span class="t" style="left:722.70px;transform-origin:0 0;top:490.99px;font-size:7.75px;line-height:7.75px;color:#1a83bd;">6.70</span>
<div class="a" style="left:834.60px;top:486.60px;width:1.00px;height:17.70px;background:#dedede"></div>
<span class="t" style="left:840.60px;transform-origin:0 0;top:490.99px;font-size:7.75px;line-height:7.75px;color:#1a83bd;">5.10</span>
<div class="a" style="left:989.90px;top:486.60px;width:1.00px;height:17.70px;background:#dedede"></div>
<span class="t" style="left:995.90px;transform-origin:0 0;top:490.29px;font-size:7.75px;line-height:7.75px;color:#1a83bd;">8.70</span>
<div class="a" style="left:1129.30px;top:486.60px;width:1.00px;height:17.70px;background:#dedede"></div>
<span class="t" style="left:1135.30px;transform-origin:0 0;top:490.99px;font-size:7.75px;line-height:7.75px;color:#1a83bd;">4</span>
<div class="a" style="left:642.70px;top:504.30px;width:593.60px;height:17.70px;background:#ffffff;border-bottom:1px solid #e3e3e3;box-sizing:border-box"></div>
<span class="t" style="left:648.30px;transform-origin:0 0;top:508.69px;font-size:7.75px;line-height:7.75px;color:#1a83bd;">Jack Humperdinck</span>
<div class="a" style="left:716.70px;top:504.30px;width:1.00px;height:17.70px;background:#dedede"></div>
<span class="t" style="left:722.70px;transform-origin:0 0;top:507.99px;font-size:7.75px;line-height:7.75px;color:#1a83bd;">11.20</span>
<div class="a" style="left:834.60px;top:504.30px;width:1.00px;height:17.70px;background:#dedede"></div>
<span class="t" style="left:840.60px;transform-origin:0 0;top:508.69px;font-size:7.75px;line-height:7.75px;color:#1a83bd;">11.20</span>
<div class="a" style="left:989.90px;top:504.30px;width:1.00px;height:17.70px;background:#dedede"></div>
<span class="t" style="left:995.90px;transform-origin:0 0;top:508.69px;font-size:7.75px;line-height:7.75px;color:#1a83bd;">11.20</span>
<div class="a" style="left:1129.30px;top:504.30px;width:1.00px;height:17.70px;background:#dedede"></div>
<span class="t" style="left:1135.30px;transform-origin:0 0;top:508.69px;font-size:7.75px;line-height:7.75px;color:#1a83bd;">1</span>
<div class="a" style="left:642.70px;top:522.00px;width:593.60px;height:17.70px;background:#fafafa;border-bottom:1px solid #e3e3e3;box-sizing:border-box"></div>
<span class="t" style="left:648.30px;transform-origin:0 0;top:526.39px;font-size:7.75px;line-height:7.75px;color:#1a83bd;">Stephen Dodd</span>
<div class="a" style="left:716.70px;top:522.00px;width:1.00px;height:17.70px;background:#dedede"></div>
<span class="t" style="left:722.70px;transform-origin:0 0;top:526.39px;font-size:7.75px;line-height:7.75px;color:#1a83bd;">3.30</span>
<div class="a" style="left:834.60px;top:522.00px;width:1.00px;height:17.70px;background:#dedede"></div>
<span class="t" style="left:840.60px;transform-origin:0 0;top:526.39px;font-size:7.75px;line-height:7.75px;color:#1a83bd;">0</span>
<div class="a" style="left:989.90px;top:522.00px;width:1.00px;height:17.70px;background:#dedede"></div>
<span class="t" style="left:995.90px;transform-origin:0 0;top:526.39px;font-size:7.75px;line-height:7.75px;color:#1a83bd;">5.60</span>
<div class="a" style="left:1129.30px;top:522.00px;width:1.00px;height:17.70px;background:#dedede"></div>
<span class="t" style="left:1135.30px;transform-origin:0 0;top:526.39px;font-size:7.75px;line-height:7.75px;color:#1a83bd;">5</span>
<div class="a" style="left:642.70px;top:539.70px;width:593.60px;height:17.70px;background:#ffffff;border-bottom:1px solid #e3e3e3;box-sizing:border-box"></div>
<span class="t" style="left:648.30px;transform-origin:0 0;top:544.09px;font-size:7.75px;line-height:7.75px;color:#1a83bd;">Switchboard 1</span>
<div class="a" style="left:716.70px;top:539.70px;width:1.00px;height:17.70px;background:#dedede"></div>
<span class="t" style="left:722.70px;transform-origin:0 0;top:543.39px;font-size:7.75px;line-height:7.75px;color:#1a83bd;">6.17</span>
<div class="a" style="left:834.60px;top:539.70px;width:1.00px;height:17.70px;background:#dedede"></div>
<span class="t" style="left:840.60px;transform-origin:0 0;top:544.09px;font-size:7.75px;line-height:7.75px;color:#1a83bd;">1.70</span>
<div class="a" style="left:989.90px;top:539.70px;width:1.00px;height:17.70px;background:#dedede"></div>
<span class="t" style="left:995.90px;transform-origin:0 0;top:544.09px;font-size:7.75px;line-height:7.75px;color:#1a83bd;">9.40</span>
<div class="a" style="left:1129.30px;top:539.70px;width:1.00px;height:17.70px;background:#dedede"></div>
<span class="t" style="left:1135.30px;transform-origin:0 0;top:543.49px;font-size:7.75px;line-height:7.75px;color:#1a83bd;">3</span>
<div class="a" style="left:642.70px;top:557.40px;width:593.60px;height:17.70px;background:#fafafa;border-bottom:1px solid #e3e3e3;box-sizing:border-box"></div>
<div class="a" style="left:716.70px;top:557.40px;width:1.00px;height:17.70px;background:#dedede"></div>
<span class="t" style="left:722.70px;transform-origin:0 0;top:561.79px;font-size:7.75px;line-height:7.75px;color:#666;">5.67</span>
<div class="a" style="left:834.60px;top:557.40px;width:1.00px;height:17.70px;background:#dedede"></div>
<span class="t" style="left:840.60px;transform-origin:0 0;top:561.79px;font-size:7.75px;line-height:7.75px;color:#666;">0</span>
<div class="a" style="left:989.90px;top:557.40px;width:1.00px;height:17.70px;background:#dedede"></div>
<span class="t" style="left:995.90px;transform-origin:0 0;top:561.79px;font-size:7.75px;line-height:7.75px;color:#666;">11.20</span>
<div class="a" style="left:1129.30px;top:557.40px;width:1.00px;height:17.70px;background:#dedede"></div>
<span class="t" style="left:1135.30px;transform-origin:0 0;top:561.79px;font-size:7.75px;line-height:7.75px;color:#666;">15</span>
</div></div>
<div class="a" style="left:642.70px;top:566.20px;width:593.60px;height:16.20px;background:#f1f1f1"></div>
<div class="a" style="left:658.20px;top:569.30px;width:93.80px;height:10.00px;background:#c1c1c1"></div>
<svg class="a" style="left:642.70px;top:566.20px" width="593.60" height="16.2"><path d="M9.6 5.1 L9.6 11.1 L6 8.1 Z" fill="#a3a3a3"/><path d="M584.2 4.8999999999999995 L584.2 11.3 L588.0 8.1 Z" fill="#4a4a4a"/></svg>
<div class="a" style="left:642.70px;top:582.40px;width:593.60px;height:20.40px;background:linear-gradient(#ececec,#dcdcdc);border-top:1px solid #d2d2d2;box-sizing:border-box;border-radius:0 0 2px 2px"></div>
<div class="a" style="left:1193.30px;top:585.20px;width:40.4px;height:14px;border:1px solid #bdbdbd;border-radius:2.5px;background:linear-gradient(#e9e9e9,#d6d6d6);box-sizing:border-box"></div>
<div class="a" style="left:1213.00px;top:586.20px;width:1.00px;height:12.00px;background:#bcbcbc"></div>
<svg class="a" style="left:1193.30px;top:585.20px" width="40.4" height="14"><path d="M13.7 3.4 L13.7 10.6 L5.8999999999999995 7 Z" fill="#c4c4c4"/><path d="M26.499999999999996 3.4 L26.499999999999996 10.6 L34.3 7 Z" fill="#c2c2c2"/></svg>
<div class="a" style="left:932.00px;top:599.60px;width:18.00px;height:1.00px;background:#d4d4d4"></div>
<div class="a" style="left:9.30px;top:392.20px;width:627.70px;height:212.20px;background:#eeeeee;border:1.8px solid #8f8f8f;border-bottom:2px solid #7d7d7d;border-top:none;border-radius:0 0 3.5px 3.5px;box-sizing:border-box;box-shadow:0 1px 2px rgba(0,0,0,.4)"></div>
<div class="a" style="left:10.00px;top:370.20px;width:626.30px;height:23.60px;background:linear-gradient(#35627a,#1d4f67 40%,#08374d 92%,#03222f);border-radius:3px 3px 0 0;box-shadow:1px 0 .8px rgba(0,0,0,.4)"></div>
<div class="a" style="left:14.70px;top:374.30px;width:16.60px;height:16.60px;border-radius:50%;background:rgba(255,255,255,.045);box-shadow:inset 0 0 0 1px rgba(0,20,30,.22)"></div>
<svg class="a" style="left:19.60px;top:380.40px" width="8" height="6"><path d="M0.3 0.2 L6.9 0.2 L3.6 4.8 Z" fill="#fff"/></svg>
<span class="t" style="left:36.80px;transform-origin:0 0;top:377.13px;font-size:11.9px;line-height:11.9px;color:#fff;font-weight:bold;transform:scaleX(1.2668);text-shadow:0 1px 1px rgba(0,0,0,.6);">Incoming Hourly Calls Chart</span>
<div class="a" style="left:613.70px;top:374.10px;width:18.60px;height:15.60px;border-radius:0 8px 8px 0;background:rgba(255,255,255,.06)"></div>
<svg class="a" style="left:616.50px;top:378.10px" width="8" height="8"><path d="M1.2 1.2 L6.8 6.8 M6.8 1.2 L1.2 6.8" stroke="#fff" stroke-width="1.75" stroke-linecap="butt"/></svg>
<div class="a" style="left:11.00px;top:393.80px;width:624.30px;height:20.60px;background:linear-gradient(#f0f0f0,#e0e0e0)"></div>
<div class="a" style="left:11.00px;top:393.80px;width:624.30px;height:1.00px;background:#fafafa"></div>
<div class="a btn" style="left:614.50px;top:397.20px;width:18.6px;height:15px"><svg width="19" height="15" viewBox="0 0 19 15" style="position:absolute;left:-1.7px;top:-1.7px"><rect x="5.2" y="3.8" width="8" height="5.9" fill="#58acdc"/><rect x="6.2" y="4.9" width="6" height="3.8" fill="#dcf0fb"/><path d="M4.4 10.6 L11.4 10.6 L11.8 12.3 L4 12.3 Z" fill="#0b7cc4"/><path d="M12.6 6.6 h2 v3 h1.1 l-2.1 2.9 l-2.1 -2.9 h1.1 Z" fill="#0b78c0"/></svg></div>
<div class="a btn" style="left:14.2px;top:396.6px;width:18.2px;height:14.3px"><svg width="18" height="14" style="position:absolute;left:-1.7px;top:-1.7px"><g stroke="#dedede" stroke-width="1" fill="none"><rect x="3.8" y="4.3" width="10.6" height="7"/><path d="M9.1 4.3 V11.3 M3.8 6.7 H14.4 M3.8 9 H14.4"/></g></svg></div>
<div class="a btn" style="left:35.3px;top:397.2px;width:18.2px;height:14.3px"><svg width="18" height="14" style="position:absolute;left:-1.7px;top:-1.7px"><path d="M3.3 9.8 L9.1 5.8 L11.4 9.5 L14.9 7.2" stroke="#1b78b0" stroke-width="1.4" fill="none" stroke-linecap="round" stroke-linejoin="round"/></svg></div>
<div class="a btn" style="left:56.4px;top:396.6px;width:18.2px;height:14.3px"><svg width="18" height="14" style="position:absolute;left:-1.7px;top:-1.7px"><g fill="#cdcdcd"><rect x="4" y="4.8" width="10.6" height="1.6"/><rect x="4" y="6.7" width="8.8" height="1.6"/><rect x="4" y="8.6" width="7.6" height="1.6"/><rect x="4" y="10.2" width="6.6" height="0.8"/></g></svg></div>
<svg class="a" style="left:0;top:0" width="660" height="609" viewBox="0 0 660 609"><path d="M41.8 536.42 H464.2" stroke="#e8e8e8" stroke-width="1"/><path d="M41.8 497.84 H464.2" stroke="#e8e8e8" stroke-width="1"/><path d="M41.8 459.26 H464.2" stroke="#e8e8e8" stroke-width="1"/><path d="M41.8 420.68 H464.2" stroke="#e8e8e8" stroke-width="1"/><path d="M41 575.00 H464.2" stroke="#ccd6eb" stroke-width="1.1"/><path d="M40.9 575.00 V580.80" stroke="#ccd6eb" stroke-width="1.1"/><path d="M150.8 575.00 V580.80" stroke="#ccd6eb" stroke-width="1.1"/><path d="M260.9 575.00 V580.80" stroke="#ccd6eb" stroke-width="1.1"/><path d="M370.9 575.00 V580.80" stroke="#ccd6eb" stroke-width="1.1"/><path d="M95.4 575.00 L205.4 463.12 L315.2 551.85 L425.4 497.84" stroke="#90cb50" stroke-width="1.5" fill="none" stroke-linejoin="round"/><circle cx="95.4" cy="575.00" r="4.6" fill="#90cb50"/><circle cx="205.4" cy="463.12" r="6.3" fill="#90cb50" fill-opacity=".28"/><circle cx="205.4" cy="463.12" r="4.1" fill="#90cb50"/><circle cx="315.2" cy="551.85" r="3.1" fill="#90cb50"/><circle cx="425.4" cy="497.84" r="3.1" fill="#90cb50"/><path d="M476.8 506.8 H489" stroke="#90cb50" stroke-width="1.5"/><circle cx="483" cy="506.8" r="3" fill="#90cb50"/><path d="M156.4 435.2 H195.4 Q196.2 435.2 196.2 436 V466 Q196.2 466.8 195.4 466.8 H178 L174.8 470.2 L171.6 466.8 H156.4 Q155.6 466.8 155.6 466 V436 Q155.6 435.2 156.4 435.2 Z" fill="#f4f4f4" fill-opacity=".94" stroke="#b2d98a" stroke-width="1.6" style="filter:drop-shadow(.8px 1px .7px rgba(0,0,0,.28))"/></svg>
<span class="t" style="left:25.21px;transform-origin:100% 0;top:570.60px;font-size:8.8px;line-height:8.8px;color:#6c6c6c;font-weight:bold;transform:scaleX(1.1000);text-shadow:0 0 2px #fff,0 0 1px #fff;">0</span>
<span class="t" style="left:20.31px;transform-origin:100% 0;top:532.70px;font-size:8.8px;line-height:8.8px;color:#6c6c6c;font-weight:bold;transform:scaleX(1.1000);text-shadow:0 0 2px #fff,0 0 1px #fff;">10</span>
<span class="t" style="left:20.31px;transform-origin:100% 0;top:494.35px;font-size:8.8px;line-height:8.8px;color:#6c6c6c;font-weight:bold;transform:scaleX(1.1000);text-shadow:0 0 2px #fff,0 0 1px #fff;">20</span>
<span class="t" style="left:20.31px;transform-origin:100% 0;top:455.85px;font-size:8.8px;line-height:8.8px;color:#6c6c6c;font-weight:bold;transform:scaleX(1.1000);text-shadow:0 0 2px #fff,0 0 1px #fff;">30</span>
<span class="t" style="left:20.31px;transform-origin:100% 0;top:417.30px;font-size:8.8px;line-height:8.8px;color:#6c6c6c;font-weight:bold;transform:scaleX(1.1000);text-shadow:0 0 2px #fff,0 0 1px #fff;">40</span>
<span class="t" style="left:84.57px;transform-origin:50% 0;top:581.54px;font-size:8.7px;line-height:8.7px;color:#6c6c6c;font-weight:bold;transform:scaleX(1.2000);text-shadow:0 0 2px #fff,0 0 1px #fff;">08:00</span>
<span class="t" style="left:194.57px;transform-origin:50% 0;top:581.54px;font-size:8.7px;line-height:8.7px;color:#6c6c6c;font-weight:bold;transform:scaleX(1.2000);text-shadow:0 0 2px #fff,0 0 1px #fff;">09:00</span>
<span class="t" style="left:304.57px;transform-origin:50% 0;top:581.54px;font-size:8.7px;line-height:8.7px;color:#6c6c6c;font-weight:bold;transform:scaleX(1.2000);text-shadow:0 0 2px #fff,0 0 1px #fff;">10:00</span>
<span class="t" style="left:414.91px;transform-origin:50% 0;top:581.54px;font-size:8.7px;line-height:8.7px;color:#6c6c6c;font-weight:bold;transform:scaleX(1.2000);text-shadow:0 0 2px #fff,0 0 1px #fff;">11:00</span>
<span class="t" style="left:493.40px;transform-origin:0 0;top:503.13px;font-size:9.3px;line-height:9.3px;color:#222;font-weight:bold;transform:scaleX(1.1067);">Incoming Calls</span>
<span class="t" style="left:161.30px;transform-origin:0 0;top:441.62px;font-size:8.6px;line-height:8.6px;color:#333;font-weight:bold;transform:scaleX(1.2866);">09:00</span>
<span class="t" style="left:161.30px;transform-origin:0 0;top:451.62px;font-size:8.6px;line-height:8.6px;color:#3c3c3c;transform:scaleX(1.1603);-webkit-text-stroke:.25px #3c3c3c;">29</span>
<div class="a" style="left:322.00px;top:600.40px;width:18.00px;height:1.00px;background:#d4d4d4"></div>
<div class="a" style="left:1254.80px;top:25.00px;width:17.00px;height:584.00px;background:#000"></div>
<div class="a" style="left:1245.20px;top:25.00px;width:12.00px;height:16.80px;background:#000"></div>
<div class="a" style="left:1245.20px;top:129.80px;width:12.00px;height:23.00px;background:#000"></div>
<div class="a" style="left:1245.20px;top:600.00px;width:12.00px;height:9.00px;background:#000"></div>
<div class="a" style="left:1271.50px;top:64.90px;width:34.40px;height:34.90px;background:#000"></div>
<div class="a" style="left:1271.50px;top:329.90px;width:32.40px;height:35.10px;background:#000"></div>
<span class="t" style="left:1282.02px;transform-origin:50% 0;top:70.07px;font-size:22.6px;line-height:22.6px;color:#fff;">5</span>
<span class="t" style="left:1279.92px;transform-origin:50% 0;top:335.37px;font-size:22.6px;line-height:22.6px;color:#fff;">6</span>
<div class="a" style="left:1259.40px;top:33.00px;width:3.40px;height:104.00px;background:#1d1d1d"></div>
<div class="a" style="left:1264.20px;top:34.00px;width:3.60px;height:103.00px;background:#1f1f1f"></div>
<div class="a" style="left:1251.00px;top:31.00px;width:12.00px;height:6.00px;background:#1c1c1c;border-radius:3px"></div>
<div class="a" style="left:1251.00px;top:134.00px;width:12.00px;height:6.00px;background:#1c1c1c;border-radius:3px"></div>
<div class="a" style="left:1263.60px;top:81.10px;width:10.40px;height:8.60px;background:#2a2a2a;border-radius:2px"></div>
<div class="a" style="left:1259.40px;top:144.00px;width:3.40px;height:462.00px;background:#1d1d1d"></div>
<div class="a" style="left:1264.20px;top:145.00px;width:3.60px;height:461.00px;background:#1f1f1f"></div>
<div class="a" style="left:1251.00px;top:142.00px;width:12.00px;height:6.00px;background:#1c1c1c;border-radius:3px"></div>
<div class="a" style="left:1251.00px;top:603.00px;width:12.00px;height:6.00px;background:#1c1c1c;border-radius:3px"></div>
<div class="a" style="left:1263.60px;top:346.20px;width:10.40px;height:8.60px;background:#2a2a2a;border-radius:2px"></div>
</body></html>
